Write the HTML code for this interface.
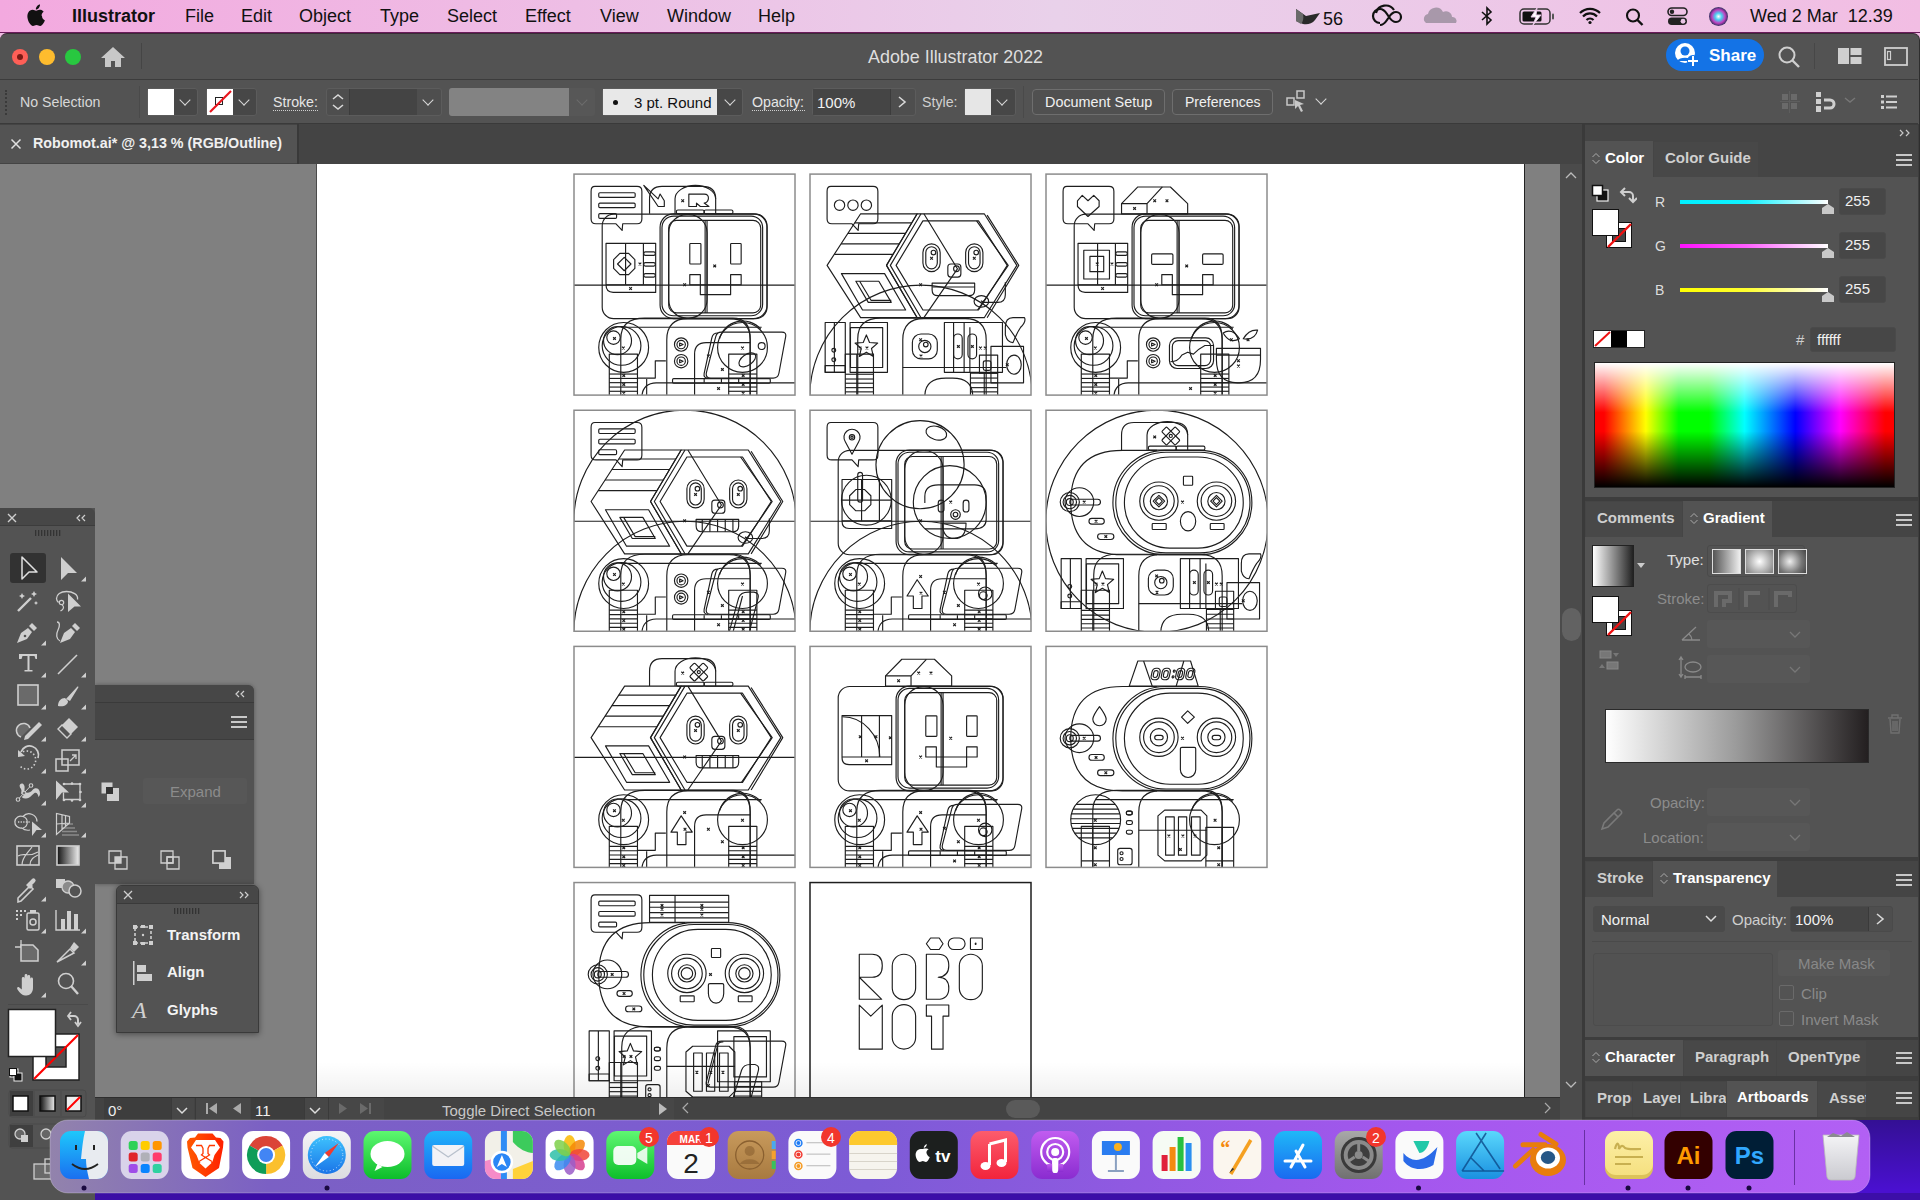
<!DOCTYPE html>
<html><head><meta charset="utf-8">
<style>
*{margin:0;padding:0;box-sizing:border-box}
html,body{width:1920px;height:1200px;overflow:hidden;background:linear-gradient(180deg,#efbde3 0,#efbde3 60px,#4410c8 60px);font-family:"Liberation Sans",sans-serif}
.a{position:absolute}
.t{position:absolute;white-space:nowrap;line-height:1}
#menubar{left:0;top:0;width:1920px;height:33px;background:linear-gradient(90deg,#f3a9df 0%,#eebee5 30%,#e9d1ea 55%,#ecc9e8 75%,#f2bde3 100%);border-bottom:1px solid #6a1a5a}
#menubar .t{top:7px;font-size:18px;color:#111}
#win{left:0;top:33px;width:1920px;height:1087px;background:#535353;border-radius:7px 7px 0 0;overflow:hidden;border-right:1px solid #2e2e2e;border-top:1px solid #3a2a36}
.ctl{background:#474747;border:1px solid #5c5c5c;border-radius:3px}
.lbl{color:#e0e0e0;font-size:14.2px}
.chev{position:absolute;width:8px;height:8px;border-right:1.6px solid #d8d8d8;border-bottom:1.6px solid #d8d8d8;transform:rotate(45deg)}
.hamb{position:absolute;width:16px;height:12px;border-top:2px solid #c8c8c8;border-bottom:2px solid #c8c8c8}
.hamb:after{content:"";position:absolute;left:0;top:3px;width:16px;height:2px;background:#c8c8c8}
.ptab{font-size:15px;font-weight:bold}
.pin{background:#474747;border:1px solid #4a4a4a;border-radius:3px}
.pdis{background:#575757;border-radius:3px}
.gbtn{position:absolute;width:29px;height:25px;border:1.5px solid #ddd}
</style></head><body>
<div id="menubar" class="a">
  <svg class="a" style="left:26px;top:4px" width="19" height="22" viewBox="0 0 19 22"><path d="M15.5 11.7c0-2.6 2.1-3.8 2.2-3.9-1.2-1.8-3.1-2-3.7-2-1.6-.2-3.1.9-3.9.9-.8 0-2-.9-3.4-.9C4.900 5.900 3.200 6.900 2.300 8.500.4 11.800 1.800 16.600 3.600 19.200c.9 1.300 2 2.700 3.400 2.700 1.400-.1 1.900-.9 3.500-.9 1.700 0 2.100.9 3.600.9 1.500 0 2.400-1.300 3.300-2.600 1-1.500 1.500-3 1.500-3-.1 0-2.900-1.100-2.900-4.600zM12.900 3.900c.7-.9 1.200-2.100 1.100-3.300-1 0-2.300.7-3 1.600-.7.800-1.300 2-1.100 3.200 1.100.1 2.300-.6 3-1.500z" fill="#111"/></svg>
  <div class="t" style="left:72px;font-weight:bold">Illustrator</div>
  <div class="t" style="left:185px">File</div>
  <div class="t" style="left:241px">Edit</div>
  <div class="t" style="left:299px">Object</div>
  <div class="t" style="left:380px">Type</div>
  <div class="t" style="left:447px">Select</div>
  <div class="t" style="left:525px">Effect</div>
  <div class="t" style="left:600px">View</div>
  <div class="t" style="left:667px">Window</div>
  <div class="t" style="left:758px">Help</div>
  <div class="t" style="left:1750px">Wed 2 Mar&nbsp; 12.39</div>
</div>
<svg class="a" style="left:1290px;top:4px" width="440" height="26" viewBox="1290 4 440 26">
 <path d="M1296 9l10 7 14-3-5 7c-3 4-8 5-12 4l-7-3z" fill="#2a2a2a"/><path d="M1296 9l7 5c1 4 0 8-2 10l-5-3z" fill="#6a6a6a"/>
 <text x="1323" y="24.5" font-family="Liberation Sans" font-size="18" fill="#111">56</text>
 <g fill="none" stroke="#111" stroke-width="2.2"><path d="M1380 23a7 7 0 0 1 0-14c3 0 5 2 7 5l2 3c2 3 4 5 7 5a5 5 0 0 0 0-10c-3 0-5 2-7 5l-2 3c-2 3-4 5-7 5"/><path d="M1376 13a10 10 0 0 1 18-3"/></g>
 <path d="M1426 23a5 5 0 0 1 2-9 8 8 0 0 1 15-2 6 6 0 0 1 9 5 4 4 0 0 1 4 6z" fill="#a898aa"/>
 <path d="M1482 12l9 8-4 4V8l4 4-9 8" fill="none" stroke="#111" stroke-width="1.6"/>
 <rect x="1520" y="9" width="30" height="15" rx="4" fill="none" stroke="#333" stroke-width="1.5"/><rect x="1522.5" y="11.5" width="19" height="10" rx="1.5" fill="#111"/><rect x="1552" y="13.5" width="2" height="6" rx="1" fill="#555"/><path d="M1537 8l-6 9h5l-3 8 8-10h-5z" fill="#fff" stroke="#e9c6e6" stroke-width="1"/>
 <path d="M1580 13a14 14 0 0 1 20 0M1583 16.5a9.5 9.5 0 0 1 14 0M1586.5 20a5 5 0 0 1 7 0" fill="none" stroke="#111" stroke-width="2.2"/><circle cx="1590" cy="22.5" r="1.6" fill="#111"/>
 <circle cx="1633" cy="15.5" r="6" fill="none" stroke="#111" stroke-width="2.1"/><path d="M1637.5 20l5 5" stroke="#111" stroke-width="2.4"/>
 <rect x="1668" y="8" width="19" height="7.5" rx="3.75" fill="none" stroke="#222" stroke-width="1.6"/><circle cx="1672" cy="11.75" r="2.2" fill="#222"/><rect x="1668" y="17.5" width="19" height="7.5" rx="3.75" fill="#222"/><circle cx="1683" cy="21.25" r="2.4" fill="#e9c6e6"/>
 <defs><radialGradient id="siri" cx="50%" cy="50%" r="50%"><stop offset="0" stop-color="#fff"/><stop offset=".35" stop-color="#4ad0f0"/><stop offset=".7" stop-color="#c040c0"/><stop offset="1" stop-color="#303060"/></radialGradient></defs><circle cx="1718.5" cy="16.5" r="9.5" fill="url(#siri)"/>
</svg>


<div id="win" class="a"></div>
<!-- title bar 33-79 -->
<div class="a" style="left:0;top:79px;width:1918px;height:1px;background:#3c3c3c"></div>
<div class="a" style="left:12px;top:49px;width:16px;height:16px;border-radius:50%;background:#fe5f57"><div class="a" style="left:5px;top:5px;width:6px;height:6px;border-radius:50%;background:#7a1a14"></div></div>
<div class="a" style="left:39px;top:49px;width:16px;height:16px;border-radius:50%;background:#febc2e"></div>
<div class="a" style="left:65px;top:49px;width:16px;height:16px;border-radius:50%;background:#28c840"></div>
<svg class="a" style="left:100px;top:45px" width="26" height="24" viewBox="0 0 26 24"><path d="M13 2L1 13h4v9h6v-6h4v6h6v-9h4z" fill="#c8c8c8"/></svg>
<div class="a" style="left:141px;top:43px;width:1px;height:26px;background:#454545"></div>
<div class="t" style="left:868px;top:49px;font-size:17.9px;color:#dedede">Adobe Illustrator 2022</div>
<div class="a" style="left:1666px;top:39px;width:98px;height:32px;border-radius:16px;background:#1473e6"></div>
<div class="t" style="left:1709px;top:47px;font-size:17px;color:#fff;font-weight:bold">Share</div>

<!-- control bar 80-124 -->
<div class="a" style="left:0;top:80px;width:1918px;height:44px;background:#535353;border-bottom:1px solid #3a3a3a"></div>
<div class="a" style="left:5px;top:90px;width:2px;height:25px;border-left:2px dotted #3a3a3a"></div>
<div class="t lbl" style="left:20px;top:95px;color:#d8d8d8">No Selection</div>
<div class="a" style="left:139px;top:86px;width:1px;height:32px;background:#4a4a4a"></div>
<div class="a ctl" style="left:147px;top:88px;width:51px;height:28px"></div>
<div class="a" style="left:148px;top:89px;width:26px;height:26px;background:#fff"></div>
<div class="chev" style="left:181px;top:96px"></div>
<div class="a ctl" style="left:206px;top:88px;width:51px;height:28px"></div>
<div class="a" style="left:207px;top:89px;width:26px;height:26px;background:#fff"></div>
<div class="a" style="left:215px;top:97px;width:8px;height:8px;border:1.5px solid #222"></div>
<svg class="a" style="left:207px;top:89px" width="26" height="26"><line x1="3" y1="23" x2="24" y2="2" stroke="#e8141c" stroke-width="2.2"/></svg>
<div class="chev" style="left:240px;top:96px"></div>
<div class="t lbl" style="left:273px;top:95px;color:#e6e6e6">Stroke:</div>
<div class="a" style="left:273px;top:110px;width:45px;height:1px;border-top:1.5px dotted #cfcfcf"></div>
<div class="a ctl" style="left:326px;top:88px;width:116px;height:28px;background:#4e4e4e"></div>
<div class="a" style="left:349px;top:89px;width:68px;height:26px;background:#444;border-left:1px solid #3c3c3c"></div>
<svg class="a" style="left:330px;top:90px" width="16" height="24"><polyline points="3,9 8,5 13,9" fill="none" stroke="#d8d8d8" stroke-width="1.6"/><polyline points="3,15 8,19 13,15" fill="none" stroke="#d8d8d8" stroke-width="1.6"/></svg>
<div class="chev" style="left:424px;top:96px"></div>
<div class="a" style="left:449px;top:88px;width:146px;height:28px;background:#575757;border-radius:3px"></div>
<div class="a" style="left:449px;top:88px;width:120px;height:28px;background:#838383;border-radius:3px 0 0 3px"></div>
<div class="chev" style="left:578px;top:96px;border-color:#6c6c6c"></div>
<div class="a ctl" style="left:602px;top:88px;width:141px;height:28px"></div>
<div class="a" style="left:603px;top:89px;width:114px;height:26px;background:#e8e8e8"></div>
<div class="a" style="left:613px;top:100px;width:5px;height:5px;border-radius:50%;background:#111"></div>
<div class="t" style="left:634px;top:95px;font-size:15px;color:#111">3 pt. Round</div>
<div class="chev" style="left:726px;top:96px"></div>
<div class="t lbl" style="left:752px;top:95px;color:#e6e6e6">Opacity:</div>
<div class="a" style="left:752px;top:110px;width:53px;height:1px;border-top:1.5px dotted #cfcfcf"></div>
<div class="a ctl" style="left:812px;top:88px;width:104px;height:28px;background:#4e4e4e"></div>
<div class="a" style="left:813px;top:89px;width:78px;height:26px;background:#454545;border-right:1px solid #3c3c3c"></div>
<div class="t" style="left:817px;top:95px;font-size:15px;color:#f2f2f2">100%</div>
<svg class="a" style="left:895px;top:94px" width="14" height="16"><polyline points="4,3 10,8 4,13" fill="none" stroke="#d8d8d8" stroke-width="1.6"/></svg>
<div class="t lbl" style="left:922px;top:95px;color:#d0d0d0">Style:</div>
<div class="a ctl" style="left:964px;top:88px;width:52px;height:28px"></div>
<div class="a" style="left:965px;top:89px;width:26px;height:26px;background:#e6e6e6"></div>
<div class="chev" style="left:998px;top:96px"></div>
<div class="a" style="left:1023px;top:86px;width:1px;height:32px;background:#4a4a4a"></div>
<div class="a" style="left:1032px;top:89px;width:133px;height:26px;border:1.5px solid #6e6e6e;border-radius:4px;background:#505050"></div>
<div class="t" style="left:1045px;top:95px;font-size:14.4px;color:#f0f0f0">Document Setup</div>
<div class="a" style="left:1172px;top:89px;width:101px;height:26px;border:1.5px solid #6e6e6e;border-radius:4px;background:#505050"></div>
<div class="t" style="left:1185px;top:95px;font-size:14px;color:#f0f0f0">Preferences</div>
<svg class="a" style="left:1285px;top:89px" width="26" height="26" viewBox="0 0 26 26"><rect x="2" y="9" width="7" height="7" fill="none" stroke="#c8c8c8" stroke-width="1.5"/><rect x="12" y="2" width="7" height="7" fill="none" stroke="#c8c8c8" stroke-width="1.5"/><path d="M10 11l9 4-4 1 3 6-2 1-3-6-3 3z" fill="#c8c8c8"/></svg>
<div class="chev" style="left:1317px;top:95px"></div>
<svg class="a" style="left:1780px;top:91px" width="20" height="22"><g fill="#6a6a6a"><rect x="2" y="3" width="6" height="6"/><rect x="11" y="3" width="6" height="6"/><rect x="2" y="12" width="6" height="6"/><rect x="11" y="12" width="6" height="6"/></g><line x1="9.5" y1="0" x2="9.5" y2="22" stroke="#5e5e5e"/><line x1="0" y1="10.5" x2="20" y2="10.5" stroke="#5e5e5e"/></svg>
<svg class="a" style="left:1815px;top:91px" width="22" height="22"><g fill="#cfcfcf"><rect x="1" y="1" width="5" height="5"/><rect x="1" y="8" width="5" height="5"/><rect x="1" y="15" width="5" height="6"/></g><path d="M9 9h6a4 4 0 0 1 0 8h-6" fill="none" stroke="#cfcfcf" stroke-width="3"/></svg>
<svg class="a" style="left:1843px;top:95px" width="14" height="10"><polyline points="2,3 7,7 12,3" fill="none" stroke="#777" stroke-width="1.4"/></svg>
<svg class="a" style="left:1880px;top:94px" width="18" height="16"><g fill="#cfcfcf"><rect x="1" y="1" width="3" height="3"/><rect x="1" y="6.5" width="3" height="3"/><rect x="1" y="12" width="3" height="3"/><rect x="6" y="1.5" width="11" height="2"/><rect x="6" y="7" width="11" height="2"/><rect x="6" y="12.5" width="11" height="2"/></g></svg>
<!-- title right icons -->
<svg class="a" style="left:1777px;top:45px" width="24" height="24"><circle cx="10" cy="10" r="7.5" fill="none" stroke="#cfcfcf" stroke-width="2"/><line x1="15.5" y1="15.5" x2="22" y2="22" stroke="#cfcfcf" stroke-width="2.4"/></svg>
<div class="a" style="left:1814px;top:43px;width:1px;height:26px;background:#474747"></div>
<svg class="a" style="left:1838px;top:48px" width="24" height="17"><g fill="#cfcfcf"><rect x="0" y="0" width="11" height="16"/><rect x="12.5" y="0" width="11" height="7"/><rect x="12.5" y="9" width="11" height="7"/></g></svg>
<svg class="a" style="left:1884px;top:47px" width="24" height="19"><rect x="1" y="1" width="22" height="17" fill="none" stroke="#cfcfcf" stroke-width="1.8"/><rect x="3.5" y="4.5" width="3" height="8" fill="none" stroke="#cfcfcf" stroke-width="1.2"/></svg>
<svg class="a" style="left:1674px;top:42px" width="26" height="26"><circle cx="11" cy="11" r="10" fill="#fff"/><circle cx="11" cy="9" r="4.5" fill="#1473e6"/><path d="M3 19a9 6 0 0 1 16 0z" fill="#1473e6"/><circle cx="19" cy="19" r="6" fill="#1473e6"/><path d="M19 14v10M14 19h10" stroke="#fff" stroke-width="2"/></svg>

<!-- tab bar 124-164 -->
<div class="a" style="left:0;top:124px;width:1582px;height:40px;background:#444"></div>
<div class="a" style="left:0;top:125px;width:297px;height:38px;background:#535353"></div>
<svg class="a" style="left:10px;top:138px" width="12" height="12"><path d="M1.5 1.5l9 9M10.5 1.5l-9 9" stroke="#e0e0e0" stroke-width="1.5"/></svg>
<div class="t" style="left:33px;top:136px;font-size:14.3px;color:#f0f0f0;font-weight:bold">Robomot.ai* @ 3,13 % (RGB/Outline)</div>

<!-- canvas -->
<div class="a" style="left:0;top:164px;width:1560px;height:933px;background:#808080"></div>
<div class="a" style="left:316px;top:164px;width:1209px;height:933px;background:#fff;border-left:1.5px solid #4a4a4a;border-right:1.5px solid #222"></div><div class="a" style="left:297px;top:124px;width:2px;height:40px;background:#393939"></div>
<!-- ART --><svg class="a" style="left:317px;top:164px" width="1208" height="933" viewBox="317 164 1208 933"><g fill="none" stroke="#1e1e1e" stroke-width="1.15" stroke-linejoin="round"><style>g *{vector-effect:non-scaling-stroke}</style><clipPath id="ab0"><rect x="574" y="174.1" width="221" height="221"/></clipPath><g clip-path="url(#ab0)"><g transform="translate(570 170.1) scale(0.19166666666666668)"><path d="M130 85H350Q375 85 375 110V255Q375 280 350 280H275L272 315L240 280H135Q110 280 110 255V110Q110 85 130 85Z"/><rect x="150" y="118" width="190" height="24" rx="6"/><rect x="150" y="172" width="190" height="24" rx="6"/><rect x="150" y="227" width="93" height="25" rx="6"/><path d="M385 80L460 150L470 125L492 160V190H460Z"/><path d="M415 228V150Q415 85 480 85H690Q760 85 760 150V228"/><path d="M548 228V150A106 70 0 0 1 760 150"/><rect x="555" y="208" width="145" height="20" rx="8"/><rect x="700" y="208" width="150" height="20" rx="8"/><path d="M620 125H700Q725 125 722 150Q718 170 700 172L725 190H680L660 172V190H620Z"/><path d="M581 153L595 167M595 153L581 167"/><rect x="168" y="230" width="860" height="545" rx="60"/><rect x="470" y="228" width="558" height="547" rx="70"/><rect x="480" y="240" width="525" height="520" rx="60"/><rect x="515" y="262" width="480" height="483" rx="40"/><rect x="515" y="232" width="200" height="540" rx="95"/><line x1="705" y1="262" x2="705" y2="745"/><line x1="715" y1="262" x2="715" y2="745"/><path d="M188 382H447V638H225Q188 638 188 600Z"/><line x1="188" y1="598" x2="447" y2="598"/><line x1="290" y1="382" x2="290" y2="598"/><line x1="383" y1="382" x2="383" y2="598"/><polygon points="338.4327719506772,512.9610059419053 305.9610059419054,545.4327719506772 260.0389940580946,545.4327719506772 227.5672280493228,512.9610059419053 227.56722804932278,467.0389940580946 260.03899405809466,434.5672280493228 305.9610059419054,434.5672280493228 338.4327719506772,467.0389940580946"/><polygon points="283,455 318,490 283,525 248,490"/><rect x="385" y="427" width="60" height="18" rx="8"/><rect x="385" y="483" width="60" height="18" rx="8"/><rect x="385" y="540" width="60" height="18" rx="8"/><path d="M358 483L372 497M372 483L358 497"/><path d="M309 611L323 625M323 611L309 625"/><rect x="625" y="383" width="58" height="107" rx="4"/><rect x="838" y="383" width="55" height="107" rx="4"/><path d="M625 545H680V598H680V650H838V598H838V545H893V598H625Z"/><path d="M748 493L762 507M762 493L748 507"/><path d="M591 591L605 605M605 591L591 605"/><line x1="20" y1="600" x2="1180" y2="600"/><circle cx="280" cy="925" r="130"/><circle cx="269" cy="917" r="101"/><circle cx="248" cy="890" r="73"/><circle cx="227" cy="874" r="35"/><path d="M225 871L239 885M239 871L225 885"/><path d="M271 921L285 935M285 921L271 935"/><path d="M265 1180V880Q265 772 390 772H850Q940 772 940 880V1180"/><line x1="280" y1="820" x2="1000" y2="820"/><circle cx="900" cy="925" r="130"/><path d="M780 880A125 125 0 0 1 995 830"/><path d="M505 1175V885Q505 775 615 775H830Q940 775 940 885V1175"/><rect x="205" y="960" width="147" height="220" rx="0"/><line x1="205" y1="1064" x2="352" y2="1064"/><line x1="205" y1="1087" x2="352" y2="1087"/><line x1="205" y1="1109" x2="352" y2="1109"/><line x1="205" y1="1132" x2="352" y2="1132"/><line x1="205" y1="1154" x2="352" y2="1154"/><path d="M273.5 1065L287.5 1079M287.5 1065L273.5 1079"/><path d="M273.5 1111L287.5 1125M287.5 1111L273.5 1125"/><path d="M273.5 1157L287.5 1171M287.5 1157L273.5 1171"/><rect x="828" y="960" width="147" height="220" rx="0"/><line x1="828" y1="1064" x2="975" y2="1064"/><line x1="828" y1="1087" x2="975" y2="1087"/><line x1="828" y1="1109" x2="975" y2="1109"/><line x1="828" y1="1132" x2="975" y2="1132"/><line x1="828" y1="1154" x2="975" y2="1154"/><path d="M896.5 1065L910.5 1079M910.5 1065L896.5 1079"/><path d="M896.5 1111L910.5 1125M910.5 1111L896.5 1125"/><path d="M896.5 1157L910.5 1171M910.5 1157L896.5 1171"/><polyline points="352,1085 445,1085 445,995 500,995"/><path d="M375 1180Q380 1112 450 1110H1180"/><line x1="400" y1="1090" x2="400" y2="1180"/><circle cx="580" cy="910" r="35"/><circle cx="580" cy="910" r="22"/><path d="M572 902L590 910L572 918Z"/><circle cx="580" cy="997" r="35"/><circle cx="580" cy="997" r="22"/><path d="M572 989L590 997L572 1005Z"/><path d="M790 845H1105Q1130 845 1125 870L1090 1060Q1085 1085 1060 1085H735Q705 1085 712 1055L760 870Q765 845 790 845Z"/><path d="M772 850Q745 850 740 875L700 1060Q695 1085 720 1085"/><rect x="535" y="1088" width="510" height="24" rx="6"/><line x1="700" y1="1090" x2="700" y2="1110"/><line x1="790" y1="1090" x2="790" y2="1110"/><line x1="880" y1="1090" x2="880" y2="1110"/><path d="M650 1180V960Q650 900 710 900H940"/><path d="M893 921L907 935M907 921L893 935"/><path d="M715 963L729 977M729 963L715 977"/><path d="M788 1033L802 1047M802 1033L788 1047"/><path d="M768 1133L782 1147M782 1133L768 1147"/><ellipse cx="925" cy="990" rx="50" ry="28" transform="rotate(-35 925 990)"/><circle cx="1000" cy="918" r="18"/></g></g><clipPath id="ab1"><rect x="810" y="174.1" width="221" height="221"/></clipPath><g clip-path="url(#ab1)"><g transform="translate(806 170.1) scale(0.19166666666666668)"><path d="M130 85H350Q375 85 375 110V255Q375 280 350 280H275L272 315L240 280H135Q110 280 110 255V110Q110 85 130 85Z"/><circle cx="175" cy="183" r="27"/><circle cx="245" cy="183" r="27"/><circle cx="315" cy="183" r="27"/><polygon points="285,228 580,228 420,497 580,770 285,770 110,497"/><polygon points="580,228 930,228 1100,497 930,770 580,770 420,497"/><polyline points="600,228 440,497 600,770"/><polyline points="945,235 1110,497 945,770"/><polygon points="610,265 900,265 1050,497 900,730 610,730 470,497"/><polyline points="890,265 1055,497 895,730"/><line x1="254.42379182156134" y1="275" x2="552.0446096654275" y2="275"/><line x1="218.64312267657994" y1="330" x2="519.3308550185874" y2="330"/><line x1="182.86245353159853" y1="385" x2="486.6171003717472" y2="385"/><line x1="147.0817843866171" y1="440" x2="453.90334572490707" y2="440"/><polygon points="185,540 410,540 520,730 295,730"/><polygon points="260,580 380,580 445,690 325,690"/><polyline points="280,580 340,680 445,680"/><polyline points="615,228 790,515 615,770"/><rect x="610" y="385" width="90" height="145" rx="45"/><rect x="625" y="400" width="60" height="115" rx="30"/><circle cx="665" cy="430" r="12"/><path d="M648 453L662 467M662 453L648 467"/><rect x="833" y="385" width="90" height="145" rx="45"/><rect x="848" y="400" width="60" height="115" rx="30"/><circle cx="888" cy="430" r="12"/><path d="M871 453L885 467M885 453L871 467"/><rect x="740" y="490" width="68" height="68" rx="16"/><circle cx="785" cy="515" r="15"/><path d="M658 590H880V625Q880 655 850 655H688Q658 655 658 625Z"/><line x1="660" y1="610" x2="880" y2="610"/><path d="M1040 585V650Q1040 690 1000 690H920"/><ellipse cx="915" cy="685" rx="38" ry="30"/><path d="M913 681L927 695M927 681L913 695"/><path d="M591 591L605 605M605 591L591 605"/><path d="M20 1180A580 580 0 0 1 1180 1180"/><path d="M505 1175V885Q505 775 615 775H830Q940 775 940 885V1175"/><path d="M270 1180V880Q270 772 390 772H850"/><rect x="100" y="795" width="105" height="260" rx="0"/><line x1="148" y1="795" x2="148" y2="1055"/><rect x="100" y="1020" width="105" height="35" rx="0"/><circle cx="145" cy="940" r="10"/><circle cx="145" cy="990" r="10"/><rect x="230" y="795" width="195" height="260" rx="0"/><rect x="232" y="822" width="168" height="208" rx="0"/><polygon points="315.0,860.0 331.45798706418924,899.3475241575014 373.9655040102995,902.8409463487533 341.6295824562643,930.6524758424986 351.4426856421333,972.1590536512467 315.0,950.0 278.5573143578667,972.1590536512467 288.3704175437357,930.6524758424986 256.0344959897005,902.8409463487533 298.54201293581076,899.3475241575014"/><path d="M275 921L289 935M289 921L275 935"/><path d="M311 921L325 935M325 921L311 935"/><rect x="205" y="960" width="147" height="220" rx="0"/><line x1="205" y1="1065" x2="352" y2="1065"/><line x1="205" y1="1090" x2="352" y2="1090"/><line x1="205" y1="1112" x2="352" y2="1112"/><line x1="205" y1="1135" x2="352" y2="1135"/><line x1="205" y1="1157" x2="352" y2="1157"/><line x1="265" y1="960" x2="265" y2="1180"/><rect x="555" y="855" width="130" height="130" rx="45"/><circle cx="620" cy="920" r="32"/><circle cx="625" cy="910" r="12"/><path d="M591 878L605 892M605 878L591 892"/><path d="M593 963L607 977M607 963L593 977"/><rect x="722" y="795" width="303" height="260" rx="0"/><line x1="770" y1="795" x2="770" y2="1055"/><line x1="825" y1="795" x2="825" y2="1055"/><line x1="855" y1="820" x2="855" y2="1055"/><rect x="770" y="855" width="45" height="130" rx="22.5"/><rect x="845" y="855" width="45" height="130" rx="22.5"/><path d="M788 913L802 927M802 913L788 927"/><path d="M861 913L875 927M875 913L861 927"/><path d="M903 921L917 935M917 921L903 935"/><path d="M928 921L942 935M942 921L928 935"/><rect x="965" y="920" width="170" height="190" rx="0"/><ellipse cx="1085" cy="1015" rx="38" ry="50"/><path d="M1043 1008L1057 1022M1057 1008L1043 1022"/><path d="M1040 820Q1040 770 1080 770H1140Q1150 790 1120 820Q1100 850 1080 900Q1050 900 1040 860Z"/><rect x="905" y="965" width="95" height="95" rx="0"/><rect x="925" y="995" width="40" height="50" rx="10"/><line x1="505" y1="1030" x2="1045" y2="1030"/><path d="M620 1180Q620 1085 730 1085H765Q870 1085 870 1180"/><rect x="858" y="1060" width="142" height="120" rx="0"/><line x1="858" y1="1085" x2="1000" y2="1085"/><line x1="858" y1="1110" x2="1000" y2="1110"/><line x1="858" y1="1135" x2="1000" y2="1135"/><line x1="858" y1="1157" x2="1000" y2="1157"/><line x1="930" y1="1060" x2="930" y2="1180"/></g></g><clipPath id="ab2"><rect x="1046" y="174.1" width="221" height="221"/></clipPath><g clip-path="url(#ab2)"><g transform="translate(1042 170.1) scale(0.19166666666666668)"><path d="M130 85H350Q375 85 375 110V255Q375 280 350 280H275L272 315L240 280H135Q110 280 110 255V110Q110 85 130 85Z"/><path d="M185 160L210 132L240 160L270 132L298 160V190L240 242L185 190Z"/><path d="M415 228V175L500 88H670L760 175V228Z"/><path d="M415 175H548V228M548 175L628 88"/><path d="M476 193L490 207M490 193L476 207"/><path d="M581 153L595 167M595 153L581 167"/><path d="M645 153L659 167M659 153L645 167"/><rect x="168" y="230" width="860" height="545" rx="60"/><rect x="470" y="228" width="558" height="547" rx="70"/><rect x="480" y="240" width="525" height="520" rx="60"/><rect x="515" y="262" width="480" height="483" rx="40"/><rect x="515" y="232" width="200" height="540" rx="95"/><line x1="705" y1="262" x2="705" y2="745"/><line x1="715" y1="262" x2="715" y2="745"/><path d="M188 382H447V638H225Q188 638 188 600Z"/><line x1="188" y1="598" x2="447" y2="598"/><line x1="290" y1="382" x2="290" y2="598"/><line x1="383" y1="382" x2="383" y2="598"/><rect x="218" y="418" width="134" height="150" rx="0"/><rect x="250" y="450" width="72" height="80" rx="0"/><rect x="385" y="427" width="60" height="18" rx="8"/><rect x="385" y="483" width="60" height="18" rx="8"/><rect x="385" y="540" width="60" height="18" rx="8"/><path d="M281 483L295 497M295 483L281 497"/><path d="M358 483L372 497M372 483L358 497"/><path d="M309 611L323 625M323 611L309 625"/><rect x="572" y="437" width="111" height="55" rx="6"/><rect x="838" y="437" width="107" height="55" rx="6"/><path d="M625 545H680V598H680V650H838V598H838V545H893V598H625Z"/><path d="M748 493L762 507M762 493L748 507"/><path d="M591 591L605 605M605 591L591 605"/><line x1="20" y1="600" x2="1180" y2="600"/><circle cx="280" cy="925" r="130"/><circle cx="269" cy="917" r="101"/><circle cx="248" cy="890" r="73"/><circle cx="227" cy="874" r="35"/><path d="M225 871L239 885M239 871L225 885"/><path d="M271 921L285 935M285 921L271 935"/><path d="M265 1180V880Q265 772 390 772H850Q940 772 940 880V1180"/><line x1="280" y1="820" x2="1000" y2="820"/><circle cx="900" cy="925" r="130"/><path d="M780 880A125 125 0 0 1 995 830"/><path d="M505 1175V885Q505 775 615 775H830Q940 775 940 885V1175"/><rect x="205" y="960" width="147" height="220" rx="0"/><line x1="205" y1="1064" x2="352" y2="1064"/><line x1="205" y1="1087" x2="352" y2="1087"/><line x1="205" y1="1109" x2="352" y2="1109"/><line x1="205" y1="1132" x2="352" y2="1132"/><line x1="205" y1="1154" x2="352" y2="1154"/><path d="M273.5 1065L287.5 1079M287.5 1065L273.5 1079"/><path d="M273.5 1111L287.5 1125M287.5 1111L273.5 1125"/><path d="M273.5 1157L287.5 1171M287.5 1157L273.5 1171"/><rect x="828" y="960" width="147" height="220" rx="0"/><line x1="828" y1="1064" x2="975" y2="1064"/><line x1="828" y1="1087" x2="975" y2="1087"/><line x1="828" y1="1109" x2="975" y2="1109"/><line x1="828" y1="1132" x2="975" y2="1132"/><line x1="828" y1="1154" x2="975" y2="1154"/><path d="M896.5 1065L910.5 1079M910.5 1065L896.5 1079"/><path d="M896.5 1111L910.5 1125M910.5 1111L896.5 1125"/><path d="M896.5 1157L910.5 1171M910.5 1157L896.5 1171"/><polyline points="352,1085 445,1085 445,995 500,995"/><path d="M375 1180Q380 1112 450 1110H1180"/><line x1="400" y1="1090" x2="400" y2="1180"/><circle cx="580" cy="910" r="35"/><circle cx="580" cy="910" r="22"/><path d="M572 902L590 910L572 918Z"/><circle cx="580" cy="997" r="35"/><circle cx="580" cy="997" r="22"/><path d="M572 989L590 997L572 1005Z"/><rect x="665" y="875" width="230" height="160" rx="40"/><rect x="680" y="890" width="200" height="130" rx="30"/><path d="M670 1000Q710 1000 730 965L760 950L790 960Q820 930 850 915H895"/><path d="M910 930H1140V990Q1140 1110 1030 1110H1020Q910 1110 910 990Z"/><line x1="910" y1="965" x2="1140" y2="965"/><path d="M945 850Q990 820 1030 880Q980 910 945 850Z"/><path d="M1050 880Q1080 830 1125 835Q1110 890 1050 880Z"/><path d="M768 1133L782 1147M782 1133L768 1147"/><path d="M1018 988L1032 1002M1032 988L1018 1002"/><path d="M1018 1015L1032 1029M1032 1015L1018 1029"/><path d="M981 878L995 892M995 878L981 892"/><path d="M1068 878L1082 892M1082 878L1068 892"/></g></g><clipPath id="ab3"><rect x="574" y="410.25" width="221" height="221"/></clipPath><g clip-path="url(#ab3)"><g transform="translate(570 406.25) scale(0.19166666666666668)"><path d="M20 600A580 580 0 0 1 1180 600"/><path d="M130 85H350Q375 85 375 110V255Q375 280 350 280H275L272 315L240 280H135Q110 280 110 255V110Q110 85 130 85Z"/><rect x="150" y="118" width="190" height="24" rx="6"/><rect x="150" y="172" width="190" height="24" rx="6"/><rect x="150" y="227" width="93" height="25" rx="6"/><polygon points="285,228 580,228 420,497 580,770 285,770 110,497"/><polygon points="580,228 930,228 1100,497 930,770 580,770 420,497"/><polyline points="600,228 440,497 600,770"/><polyline points="945,235 1110,497 945,770"/><polygon points="610,265 900,265 1050,497 900,730 610,730 470,497"/><polyline points="890,265 1055,497 895,730"/><line x1="254.42379182156134" y1="275" x2="552.0446096654275" y2="275"/><line x1="218.64312267657994" y1="330" x2="519.3308550185874" y2="330"/><line x1="182.86245353159853" y1="385" x2="486.6171003717472" y2="385"/><line x1="147.0817843866171" y1="440" x2="453.90334572490707" y2="440"/><polygon points="185,540 410,540 520,730 295,730"/><polygon points="260,580 380,580 445,690 325,690"/><polyline points="280,580 340,680 445,680"/><polyline points="615,228 790,515 615,770"/><rect x="610" y="385" width="90" height="145" rx="45"/><rect x="625" y="400" width="60" height="115" rx="30"/><circle cx="665" cy="430" r="12"/><path d="M648 453L662 467M662 453L648 467"/><rect x="833" y="385" width="90" height="145" rx="45"/><rect x="848" y="400" width="60" height="115" rx="30"/><circle cx="888" cy="430" r="12"/><path d="M871 453L885 467M885 453L871 467"/><rect x="740" y="490" width="68" height="68" rx="16"/><circle cx="785" cy="515" r="15"/><path d="M658 590H880V625Q880 655 850 655H688Q658 655 658 625Z"/><line x1="690" y1="590" x2="690" y2="655"/><line x1="730" y1="590" x2="730" y2="655"/><line x1="770" y1="590" x2="770" y2="655"/><line x1="810" y1="590" x2="810" y2="655"/><line x1="850" y1="590" x2="850" y2="655"/><path d="M1040 585V650Q1040 690 1000 690H920"/><ellipse cx="915" cy="685" rx="38" ry="30"/><path d="M913 681L927 695M927 681L913 695"/><path d="M591 591L605 605M605 591L591 605"/><line x1="20" y1="600" x2="1180" y2="600"/><path d="M20 1180A580 580 0 0 1 1180 1180"/><circle cx="280" cy="925" r="130"/><circle cx="269" cy="917" r="101"/><circle cx="248" cy="890" r="73"/><circle cx="227" cy="874" r="35"/><path d="M225 871L239 885M239 871L225 885"/><path d="M271 921L285 935M285 921L271 935"/><path d="M265 1180V880Q265 772 390 772H850Q940 772 940 880V1180"/><line x1="280" y1="820" x2="1000" y2="820"/><circle cx="900" cy="925" r="130"/><path d="M780 880A125 125 0 0 1 995 830"/><path d="M505 1175V885Q505 775 615 775H830Q940 775 940 885V1175"/><rect x="205" y="960" width="147" height="220" rx="0"/><line x1="205" y1="1064" x2="352" y2="1064"/><line x1="205" y1="1087" x2="352" y2="1087"/><line x1="205" y1="1109" x2="352" y2="1109"/><line x1="205" y1="1132" x2="352" y2="1132"/><line x1="205" y1="1154" x2="352" y2="1154"/><path d="M273.5 1065L287.5 1079M287.5 1065L273.5 1079"/><path d="M273.5 1111L287.5 1125M287.5 1111L273.5 1125"/><path d="M273.5 1157L287.5 1171M287.5 1157L273.5 1171"/><rect x="828" y="960" width="147" height="220" rx="0"/><line x1="828" y1="1064" x2="975" y2="1064"/><line x1="828" y1="1087" x2="975" y2="1087"/><line x1="828" y1="1109" x2="975" y2="1109"/><line x1="828" y1="1132" x2="975" y2="1132"/><line x1="828" y1="1154" x2="975" y2="1154"/><path d="M896.5 1065L910.5 1079M910.5 1065L896.5 1079"/><path d="M896.5 1111L910.5 1125M910.5 1111L896.5 1125"/><path d="M896.5 1157L910.5 1171M910.5 1157L896.5 1171"/><polyline points="352,1085 445,1085 445,995 500,995"/><path d="M375 1180Q380 1112 450 1110H1180"/><line x1="400" y1="1090" x2="400" y2="1180"/><circle cx="580" cy="910" r="35"/><circle cx="580" cy="910" r="22"/><path d="M572 902L590 910L572 918Z"/><circle cx="580" cy="997" r="35"/><circle cx="580" cy="997" r="22"/><path d="M572 989L590 997L572 1005Z"/><path d="M790 845H1105Q1130 845 1125 870L1090 1060Q1085 1085 1060 1085H735Q705 1085 712 1055L760 870Q765 845 790 845Z"/><path d="M772 850Q745 850 740 875L700 1060Q695 1085 720 1085"/><rect x="535" y="1088" width="510" height="24" rx="6"/><line x1="700" y1="1090" x2="700" y2="1110"/><line x1="790" y1="1090" x2="790" y2="1110"/><line x1="880" y1="1090" x2="880" y2="1110"/><path d="M650 1180V960Q650 900 710 900H940"/><path d="M893 921L907 935M907 921L893 935"/><path d="M715 963L729 977M729 963L715 977"/><path d="M788 1033L802 1047M802 1033L788 1047"/><path d="M768 1133L782 1147M782 1133L768 1147"/><path d="M830 1180L880 1000Q890 970 930 970H960Q990 975 980 1005L935 1180"/><path d="M850 1180L900 990"/></g></g><clipPath id="ab4"><rect x="810" y="410.25" width="221" height="221"/></clipPath><g clip-path="url(#ab4)"><g transform="translate(806 406.25) scale(0.19166666666666668)"><path d="M130 85H350Q375 85 375 110V255Q375 280 350 280H275L272 315L240 280H135Q110 280 110 255V110Q110 85 130 85Z"/><path d="M240 250L205 185A42 42 0 1 1 275 185Z"/><circle cx="240" cy="162" r="14"/><circle cx="240" cy="162" r="6"/><rect x="168" y="230" width="860" height="545" rx="60"/><rect x="470" y="228" width="558" height="547" rx="70"/><rect x="480" y="240" width="525" height="520" rx="60"/><rect x="515" y="262" width="480" height="483" rx="40"/><rect x="515" y="232" width="200" height="540" rx="95"/><line x1="705" y1="262" x2="705" y2="745"/><line x1="715" y1="262" x2="715" y2="745"/><path d="M188 382H447V638H225Q188 638 188 600Z"/><line x1="188" y1="598" x2="447" y2="598"/><line x1="290" y1="382" x2="290" y2="598"/><line x1="383" y1="382" x2="383" y2="598"/><polygon points="338.4327719506772,512.9610059419053 305.9610059419054,545.4327719506772 260.0389940580946,545.4327719506772 227.5672280493228,512.9610059419053 227.56722804932278,467.0389940580946 260.03899405809466,434.5672280493228 305.9610059419054,434.5672280493228 338.4327719506772,467.0389940580946"/><circle cx="315" cy="490" r="130"/><rect x="270" y="345" width="25" height="155" rx="12.5"/><line x1="188" y1="490" x2="447" y2="490"/><circle cx="595" cy="305" r="230"/><ellipse cx="680" cy="140" rx="55" ry="35" transform="rotate(15 680 140)"/><circle cx="750" cy="500" r="190"/><path d="M620 505V470Q620 410 690 410H880Q940 410 940 470V590Q940 640 880 640H620"/><rect x="690" y="490" width="30" height="62" rx="15.0"/><rect x="820" y="490" width="30" height="62" rx="15.0"/><circle cx="780" cy="565" r="25"/><circle cx="780" cy="565" r="12"/><path d="M712 610H835Q835 690 775 690Q712 690 712 610"/><path d="M748 493L762 507M762 493L748 507"/><path d="M591 591L605 605M605 591L591 605"/><line x1="20" y1="600" x2="1180" y2="600"/><path d="M20 1180A580 580 0 0 1 1180 1180"/><circle cx="280" cy="925" r="130"/><circle cx="269" cy="917" r="101"/><circle cx="248" cy="890" r="73"/><circle cx="227" cy="874" r="35"/><path d="M225 871L239 885M239 871L225 885"/><path d="M271 921L285 935M285 921L271 935"/><path d="M265 1180V880Q265 772 390 772H850Q940 772 940 880V1180"/><line x1="280" y1="820" x2="1000" y2="820"/><circle cx="900" cy="925" r="130"/><path d="M780 880A125 125 0 0 1 995 830"/><path d="M505 1175V885Q505 775 615 775H830Q940 775 940 885V1175"/><rect x="205" y="960" width="147" height="220" rx="0"/><line x1="205" y1="1064" x2="352" y2="1064"/><line x1="205" y1="1087" x2="352" y2="1087"/><line x1="205" y1="1109" x2="352" y2="1109"/><line x1="205" y1="1132" x2="352" y2="1132"/><line x1="205" y1="1154" x2="352" y2="1154"/><path d="M273.5 1065L287.5 1079M287.5 1065L273.5 1079"/><path d="M273.5 1111L287.5 1125M287.5 1111L273.5 1125"/><path d="M273.5 1157L287.5 1171M287.5 1157L273.5 1171"/><rect x="828" y="960" width="147" height="220" rx="0"/><line x1="828" y1="1064" x2="975" y2="1064"/><line x1="828" y1="1087" x2="975" y2="1087"/><line x1="828" y1="1109" x2="975" y2="1109"/><line x1="828" y1="1132" x2="975" y2="1132"/><line x1="828" y1="1154" x2="975" y2="1154"/><path d="M896.5 1065L910.5 1079M910.5 1065L896.5 1079"/><path d="M896.5 1111L910.5 1125M910.5 1111L896.5 1125"/><path d="M896.5 1157L910.5 1171M910.5 1157L896.5 1171"/><polyline points="352,1085 445,1085 445,995 500,995"/><path d="M375 1180Q380 1112 450 1110H1180"/><line x1="400" y1="1090" x2="400" y2="1180"/><path d="M580 905L638 990H605V1055H560V990H527Z"/><path d="M591 881L605 895M605 881L591 895"/><path d="M593 968L607 982M607 968L593 982"/><path d="M790 845H1105Q1130 845 1125 870L1090 1060Q1085 1085 1060 1085H735Q705 1085 712 1055L760 870Q765 845 790 845Z"/><path d="M772 850Q745 850 740 875L700 1060Q695 1085 720 1085"/><rect x="535" y="1088" width="510" height="24" rx="6"/><line x1="700" y1="1090" x2="700" y2="1110"/><line x1="790" y1="1090" x2="790" y2="1110"/><line x1="880" y1="1090" x2="880" y2="1110"/><path d="M650 1180V960Q650 900 710 900H940"/><path d="M893 921L907 935M907 921L893 935"/><path d="M715 963L729 977M729 963L715 977"/><path d="M788 1033L802 1047M802 1033L788 1047"/><path d="M768 1133L782 1147M782 1133L768 1147"/><circle cx="935" cy="978" r="35"/><circle cx="925" cy="988" r="20"/></g></g><clipPath id="ab5"><rect x="1046" y="410.25" width="221" height="221"/></clipPath><g clip-path="url(#ab5)"><g transform="translate(1042 406.25) scale(0.19166666666666668)"><circle cx="600" cy="600" r="580"/><path d="M415 228V150Q415 85 480 85H690Q760 85 760 150V228"/><path d="M548 228V150A106 70 0 0 1 760 150"/><rect x="555" y="208" width="145" height="20" rx="8"/><rect x="700" y="208" width="150" height="20" rx="8"/><rect x="622" y="137" width="100" height="36" rx="6" transform="rotate(45 672 155)"/><rect x="622" y="137" width="100" height="36" rx="6" transform="rotate(-45 672 155)"/><circle cx="672" cy="155" r="8"/><path d="M581 153L595 167M595 153L581 167"/><path d="M600 230H420Q150 230 150 500Q150 775 420 775H600"/><rect x="370" y="230" width="725" height="545" rx="272"/><rect x="385" y="240" width="700" height="525" rx="262"/><rect x="430" y="265" width="620" height="475" rx="237"/><circle cx="610" cy="495" r="100"/><circle cx="610" cy="495" r="80"/><circle cx="610" cy="495" r="45"/><polygon points="580,495 610,465 640,495 610,525"/><polygon points="592,495 610,477 628,495 610,513"/><circle cx="910" cy="495" r="100"/><circle cx="910" cy="495" r="80"/><circle cx="910" cy="495" r="45"/><polygon points="880,495 910,465 940,495 910,525"/><polygon points="892,495 910,477 928,495 910,513"/><circle cx="145" cy="500" r="50"/><circle cx="145" cy="500" r="35"/><circle cx="145" cy="500" r="18"/><circle cx="195" cy="500" r="75"/><rect x="145" y="485" width="160" height="30" rx="15.0"/><rect x="245" y="585" width="80" height="30" rx="15.0"/><rect x="290" y="665" width="85" height="30" rx="15.0"/><path d="M213 493L227 507M227 493L213 507"/><path d="M275 593L289 607M289 593L275 607"/><path d="M326 673L340 687M340 673L326 687"/><path d="M726 493L740 507M740 493L726 507"/><ellipse cx="762" cy="600" rx="40" ry="50"/><rect x="738" y="365" width="48" height="47" rx="4"/><rect x="575" y="612" width="73" height="31" rx="4"/><rect x="878" y="612" width="72" height="31" rx="4"/><path d="M505 1175V885Q505 775 615 775H830Q940 775 940 885V1175"/><path d="M270 1180V880Q270 772 390 772H850"/><rect x="100" y="795" width="105" height="260" rx="0"/><line x1="148" y1="795" x2="148" y2="1055"/><rect x="100" y="1020" width="105" height="35" rx="0"/><circle cx="145" cy="940" r="10"/><circle cx="145" cy="990" r="10"/><rect x="230" y="795" width="195" height="260" rx="0"/><rect x="232" y="822" width="168" height="208" rx="0"/><polygon points="315.0,860.0 331.45798706418924,899.3475241575014 373.9655040102995,902.8409463487533 341.6295824562643,930.6524758424986 351.4426856421333,972.1590536512467 315.0,950.0 278.5573143578667,972.1590536512467 288.3704175437357,930.6524758424986 256.0344959897005,902.8409463487533 298.54201293581076,899.3475241575014"/><path d="M275 921L289 935M289 921L275 935"/><path d="M311 921L325 935M325 921L311 935"/><rect x="205" y="960" width="147" height="220" rx="0"/><line x1="205" y1="1065" x2="352" y2="1065"/><line x1="205" y1="1090" x2="352" y2="1090"/><line x1="205" y1="1112" x2="352" y2="1112"/><line x1="205" y1="1135" x2="352" y2="1135"/><line x1="205" y1="1157" x2="352" y2="1157"/><line x1="265" y1="960" x2="265" y2="1180"/><rect x="555" y="855" width="130" height="130" rx="45"/><circle cx="620" cy="920" r="32"/><circle cx="625" cy="910" r="12"/><path d="M591 878L605 892M605 878L591 892"/><path d="M593 963L607 977M607 963L593 977"/><rect x="722" y="795" width="303" height="260" rx="0"/><line x1="770" y1="795" x2="770" y2="1055"/><line x1="825" y1="795" x2="825" y2="1055"/><line x1="855" y1="820" x2="855" y2="1055"/><rect x="770" y="855" width="45" height="130" rx="22.5"/><rect x="845" y="855" width="45" height="130" rx="22.5"/><path d="M788 913L802 927M802 913L788 927"/><path d="M861 913L875 927M875 913L861 927"/><path d="M903 921L917 935M917 921L903 935"/><path d="M928 921L942 935M942 921L928 935"/><rect x="965" y="920" width="170" height="190" rx="0"/><ellipse cx="1085" cy="1015" rx="38" ry="50"/><path d="M1043 1008L1057 1022M1057 1008L1043 1022"/><path d="M1040 820Q1040 770 1080 770H1140Q1150 790 1120 820Q1100 850 1080 900Q1050 900 1040 860Z"/><rect x="905" y="965" width="95" height="95" rx="0"/><rect x="925" y="995" width="40" height="50" rx="10"/><line x1="505" y1="1030" x2="1045" y2="1030"/><path d="M620 1180Q620 1085 730 1085H765Q870 1085 870 1180"/><rect x="858" y="1060" width="142" height="120" rx="0"/><line x1="858" y1="1085" x2="1000" y2="1085"/><line x1="858" y1="1110" x2="1000" y2="1110"/><line x1="858" y1="1135" x2="1000" y2="1135"/><line x1="858" y1="1157" x2="1000" y2="1157"/><line x1="930" y1="1060" x2="930" y2="1180"/></g></g><clipPath id="ab6"><rect x="574" y="646.4" width="221" height="221"/></clipPath><g clip-path="url(#ab6)"><g transform="translate(570 642.4) scale(0.19166666666666668)"><path d="M415 228V150Q415 85 480 85H690Q760 85 760 150V228"/><path d="M548 228V150A106 70 0 0 1 760 150"/><rect x="555" y="208" width="145" height="20" rx="8"/><rect x="700" y="208" width="150" height="20" rx="8"/><rect x="622" y="137" width="100" height="36" rx="6" transform="rotate(45 672 155)"/><rect x="622" y="137" width="100" height="36" rx="6" transform="rotate(-45 672 155)"/><circle cx="672" cy="155" r="8"/><path d="M581 153L595 167M595 153L581 167"/><polygon points="285,228 580,228 420,497 580,770 285,770 110,497"/><polygon points="580,228 930,228 1100,497 930,770 580,770 420,497"/><polyline points="600,228 440,497 600,770"/><polyline points="945,235 1110,497 945,770"/><polygon points="610,265 900,265 1050,497 900,730 610,730 470,497"/><polyline points="890,265 1055,497 895,730"/><line x1="254.42379182156134" y1="275" x2="552.0446096654275" y2="275"/><line x1="218.64312267657994" y1="330" x2="519.3308550185874" y2="330"/><line x1="182.86245353159853" y1="385" x2="486.6171003717472" y2="385"/><line x1="147.0817843866171" y1="440" x2="453.90334572490707" y2="440"/><polygon points="185,540 410,540 520,730 295,730"/><polygon points="260,580 380,580 445,690 325,690"/><polyline points="280,580 340,680 445,680"/><polyline points="615,228 790,515 615,770"/><rect x="610" y="385" width="90" height="145" rx="45"/><rect x="625" y="400" width="60" height="115" rx="30"/><circle cx="665" cy="430" r="12"/><path d="M648 453L662 467M662 453L648 467"/><rect x="833" y="385" width="90" height="145" rx="45"/><rect x="848" y="400" width="60" height="115" rx="30"/><circle cx="888" cy="430" r="12"/><path d="M871 453L885 467M885 453L871 467"/><rect x="740" y="490" width="68" height="68" rx="16"/><circle cx="785" cy="515" r="15"/><path d="M658 590H880V625Q880 655 850 655H688Q658 655 658 625Z"/><line x1="690" y1="590" x2="690" y2="655"/><line x1="730" y1="590" x2="730" y2="655"/><line x1="770" y1="590" x2="770" y2="655"/><line x1="810" y1="590" x2="810" y2="655"/><line x1="850" y1="590" x2="850" y2="655"/><path d="M591 591L605 605M605 591L591 605"/><line x1="20" y1="600" x2="1180" y2="600"/><circle cx="280" cy="925" r="130"/><circle cx="269" cy="917" r="101"/><circle cx="248" cy="890" r="73"/><circle cx="227" cy="874" r="35"/><path d="M225 871L239 885M239 871L225 885"/><path d="M271 921L285 935M285 921L271 935"/><path d="M265 1180V880Q265 772 390 772H850Q940 772 940 880V1180"/><line x1="280" y1="820" x2="1000" y2="820"/><circle cx="900" cy="925" r="130"/><path d="M780 880A125 125 0 0 1 995 830"/><path d="M505 1175V885Q505 775 615 775H830Q940 775 940 885V1175"/><rect x="205" y="960" width="147" height="220" rx="0"/><line x1="205" y1="1064" x2="352" y2="1064"/><line x1="205" y1="1087" x2="352" y2="1087"/><line x1="205" y1="1109" x2="352" y2="1109"/><line x1="205" y1="1132" x2="352" y2="1132"/><line x1="205" y1="1154" x2="352" y2="1154"/><path d="M273.5 1065L287.5 1079M287.5 1065L273.5 1079"/><path d="M273.5 1111L287.5 1125M287.5 1111L273.5 1125"/><path d="M273.5 1157L287.5 1171M287.5 1157L273.5 1171"/><rect x="828" y="960" width="147" height="220" rx="0"/><line x1="828" y1="1064" x2="975" y2="1064"/><line x1="828" y1="1087" x2="975" y2="1087"/><line x1="828" y1="1109" x2="975" y2="1109"/><line x1="828" y1="1132" x2="975" y2="1132"/><line x1="828" y1="1154" x2="975" y2="1154"/><path d="M896.5 1065L910.5 1079M910.5 1065L896.5 1079"/><path d="M896.5 1111L910.5 1125M910.5 1111L896.5 1125"/><path d="M896.5 1157L910.5 1171M910.5 1157L896.5 1171"/><polyline points="352,1085 445,1085 445,995 500,995"/><path d="M375 1180Q380 1112 450 1110H1180"/><line x1="400" y1="1090" x2="400" y2="1180"/><path d="M580 905L638 990H605V1055H560V990H527Z"/><path d="M591 881L605 895M605 881L591 895"/><path d="M593 968L607 982M607 968L593 982"/><path d="M650 1180V960Q650 900 710 900H940"/><path d="M893 921L907 935M907 921L893 935"/><path d="M715 968L729 982M729 968L715 982"/><path d="M788 1033L802 1047M802 1033L788 1047"/></g></g><clipPath id="ab7"><rect x="810" y="646.4" width="221" height="221"/></clipPath><g clip-path="url(#ab7)"><g transform="translate(806 642.4) scale(0.19166666666666668)"><path d="M415 228V175L500 88H670L760 175V228Z"/><path d="M415 175H548V228M548 175L628 88"/><path d="M476 193L490 207M490 193L476 207"/><path d="M581 153L595 167M595 153L581 167"/><path d="M645 153L659 167M659 153L645 167"/><rect x="168" y="230" width="860" height="545" rx="60"/><rect x="470" y="228" width="558" height="547" rx="70"/><rect x="480" y="240" width="525" height="520" rx="60"/><rect x="515" y="262" width="480" height="483" rx="40"/><rect x="515" y="232" width="200" height="540" rx="95"/><line x1="705" y1="262" x2="705" y2="745"/><line x1="715" y1="262" x2="715" y2="745"/><path d="M188 382H447V638H225Q188 638 188 600Z"/><line x1="188" y1="598" x2="447" y2="598"/><line x1="290" y1="382" x2="290" y2="598"/><line x1="383" y1="382" x2="383" y2="598"/><path d="M190 388A195 210 0 0 1 385 598"/><path d="M276 485L290 499M290 485L276 499"/><path d="M358 485L372 499M372 485L358 499"/><path d="M433 491L447 505M447 491L433 505"/><path d="M309 611L323 625M323 611L309 625"/><rect x="625" y="383" width="58" height="107" rx="4"/><rect x="838" y="383" width="55" height="107" rx="4"/><path d="M625 545H680V598H680V650H838V598H838V545H893V598H625Z"/><path d="M748 493L762 507M762 493L748 507"/><path d="M591 591L605 605M605 591L591 605"/><circle cx="280" cy="925" r="130"/><circle cx="269" cy="917" r="101"/><circle cx="248" cy="890" r="73"/><circle cx="227" cy="874" r="35"/><path d="M225 871L239 885M239 871L225 885"/><path d="M271 921L285 935M285 921L271 935"/><path d="M265 1180V880Q265 772 390 772H850Q940 772 940 880V1180"/><line x1="280" y1="820" x2="1000" y2="820"/><circle cx="900" cy="925" r="130"/><path d="M780 880A125 125 0 0 1 995 830"/><path d="M505 1175V885Q505 775 615 775H830Q940 775 940 885V1175"/><rect x="205" y="960" width="147" height="220" rx="0"/><line x1="205" y1="1064" x2="352" y2="1064"/><line x1="205" y1="1087" x2="352" y2="1087"/><line x1="205" y1="1109" x2="352" y2="1109"/><line x1="205" y1="1132" x2="352" y2="1132"/><line x1="205" y1="1154" x2="352" y2="1154"/><path d="M273.5 1065L287.5 1079M287.5 1065L273.5 1079"/><path d="M273.5 1111L287.5 1125M287.5 1111L273.5 1125"/><path d="M273.5 1157L287.5 1171M287.5 1157L273.5 1171"/><rect x="828" y="960" width="147" height="220" rx="0"/><line x1="828" y1="1064" x2="975" y2="1064"/><line x1="828" y1="1087" x2="975" y2="1087"/><line x1="828" y1="1109" x2="975" y2="1109"/><line x1="828" y1="1132" x2="975" y2="1132"/><line x1="828" y1="1154" x2="975" y2="1154"/><path d="M896.5 1065L910.5 1079M910.5 1065L896.5 1079"/><path d="M896.5 1111L910.5 1125M910.5 1111L896.5 1125"/><path d="M896.5 1157L910.5 1171M910.5 1157L896.5 1171"/><polyline points="352,1085 445,1085 445,995 500,995"/><path d="M375 1180Q380 1112 450 1110H1180"/><line x1="400" y1="1090" x2="400" y2="1180"/><path d="M580 905L638 990H605V1055H560V990H527Z"/><path d="M591 881L605 895M605 881L591 895"/><path d="M593 968L607 982M607 968L593 982"/><path d="M790 845H1105Q1130 845 1125 870L1090 1060Q1085 1085 1060 1085H735Q705 1085 712 1055L760 870Q765 845 790 845Z"/><path d="M772 850Q745 850 740 875L700 1060Q695 1085 720 1085"/><rect x="535" y="1088" width="510" height="24" rx="6"/><line x1="700" y1="1090" x2="700" y2="1110"/><line x1="790" y1="1090" x2="790" y2="1110"/><line x1="880" y1="1090" x2="880" y2="1110"/><path d="M650 1180V960Q650 900 710 900H940"/><path d="M893 921L907 935M907 921L893 935"/><path d="M715 963L729 977M729 963L715 977"/><path d="M788 1033L802 1047M802 1033L788 1047"/><path d="M768 1133L782 1147M782 1133L768 1147"/><circle cx="935" cy="978" r="35"/><circle cx="925" cy="988" r="20"/></g></g><clipPath id="ab8"><rect x="1046" y="646.4" width="221" height="221"/></clipPath><g clip-path="url(#ab8)"><g transform="translate(1042 642.4) scale(0.19166666666666668)"><polygon points="500,97 775,97 815,228 455,228"/><line x1="530" y1="97" x2="575" y2="228"/><line x1="740" y1="97" x2="700" y2="228"/><g transform="skewX(-12) translate(32 0)"><rect x="575" y="135" width="42" height="60" rx="18"/><rect x="585" y="147" width="22" height="36" rx="10"/><rect x="628" y="135" width="42" height="60" rx="18"/><rect x="638" y="147" width="22" height="36" rx="10"/><rect x="703" y="135" width="42" height="60" rx="18"/><rect x="713" y="147" width="22" height="36" rx="10"/><rect x="756" y="135" width="42" height="60" rx="18"/><rect x="766" y="147" width="22" height="36" rx="10"/><circle cx="690" cy="150" r="5"/><circle cx="690" cy="180" r="5"/></g><path d="M600 230H420Q150 230 150 500Q150 775 420 775H600"/><rect x="370" y="230" width="725" height="545" rx="272"/><rect x="385" y="240" width="700" height="525" rx="262"/><rect x="430" y="265" width="620" height="475" rx="237"/><circle cx="610" cy="495" r="100"/><circle cx="610" cy="495" r="80"/><circle cx="610" cy="495" r="45"/><rect x="588" y="485" width="44" height="23" rx="11.5"/><circle cx="910" cy="495" r="100"/><circle cx="910" cy="495" r="80"/><circle cx="910" cy="495" r="45"/><rect x="888" y="485" width="44" height="23" rx="11.5"/><circle cx="145" cy="500" r="50"/><circle cx="145" cy="500" r="35"/><circle cx="145" cy="500" r="18"/><circle cx="195" cy="500" r="75"/><rect x="145" y="485" width="160" height="30" rx="15.0"/><rect x="245" y="585" width="80" height="30" rx="15.0"/><rect x="290" y="665" width="85" height="30" rx="15.0"/><path d="M213 493L227 507M227 493L213 507"/><path d="M275 593L289 607M289 593L275 607"/><path d="M326 673L340 687M340 673L326 687"/><path d="M726 493L740 507M740 493L726 507"/><path d="M722 555Q722 548 730 548H795Q802 548 802 555V665A40 40 0 0 1 722 665Z"/><polygon points="728,390 760,357 795,390 760,422"/><path d="M300 335Q268 378 265 400A35 35 0 0 0 335 400Q332 378 300 335Z"/><circle cx="280" cy="925" r="130"/><line x1="177.530492340404" y1="845" x2="382.469507659596" y2="845"/><line x1="162.20781010610256" y1="870" x2="397.79218989389744" y2="870"/><line x1="153.50889359326482" y1="895" x2="406.4911064067352" y2="895"/><line x1="150.0961894323342" y1="920" x2="409.9038105676658" y2="920"/><line x1="151.5476742133487" y1="945" x2="408.4523257866513" y2="945"/><line x1="158.03689082349533" y1="970" x2="401.96310917650464" y2="970"/><line x1="170.45548849896676" y1="995" x2="389.54451150103324" y2="995"/><line x1="191.25880325350576" y1="1020" x2="368.7411967464942" y2="1020"/><path d="M265 1180V880Q265 772 390 772H850Q940 772 940 880V1180"/><line x1="280" y1="820" x2="1000" y2="820"/><circle cx="900" cy="925" r="130"/><path d="M780 880A125 125 0 0 1 995 830"/><path d="M505 1175V885Q505 775 615 775H830Q940 775 940 885V1175"/><rect x="440" y="880" width="30" height="20" rx="10.0"/><rect x="440" y="880" width="32" height="20" rx="9"/><rect x="440" y="930" width="32" height="20" rx="9"/><rect x="440" y="980" width="32" height="20" rx="9"/><rect x="395" y="1075" width="75" height="85" rx="12"/><circle cx="415" cy="1100" r="8"/><circle cx="415" cy="1130" r="8"/><path d="M640 875H830L860 905V1110L830 1140H640L605 1110V905Z"/><rect x="645" y="910" width="45" height="200" rx="0"/><rect x="712" y="910" width="43" height="200" rx="0"/><rect x="780" y="910" width="45" height="200" rx="0"/><line x1="505" y1="980" x2="860" y2="980"/><path d="M655 1003L669 1017M669 1003L655 1017"/><path d="M728 1003L742 1017M742 1003L728 1017"/><path d="M791 1003L805 1017M805 1003L791 1017"/><path d="M715 1073L729 1087M729 1073L715 1087"/><rect x="205" y="960" width="147" height="220" rx="0"/><line x1="265" y1="960" x2="265" y2="1180"/><line x1="205" y1="1140" x2="352" y2="1140"/><rect x="855" y="965" width="145" height="215" rx="0"/><line x1="940" y1="965" x2="940" y2="1180"/><line x1="855" y1="1140" x2="1000" y2="1140"/><path d="M271 921L285 935M285 921L271 935"/><path d="M271 1065L285 1079M285 1065L271 1079"/><path d="M271 1153L285 1167M285 1153L271 1167"/><path d="M896 921L910 935M910 921L896 935"/><path d="M915 1065L929 1079M929 1065L915 1079"/><path d="M915 1153L929 1167M929 1153L915 1167"/></g></g><clipPath id="ab9"><rect x="574" y="882.5500000000001" width="221" height="221"/></clipPath><g clip-path="url(#ab9)"><g transform="translate(570 878.5500000000001) scale(0.19166666666666668)"><path d="M130 85H350Q375 85 375 110V255Q375 280 350 280H275L272 315L240 280H135Q110 280 110 255V110Q110 85 130 85Z"/><rect x="150" y="118" width="190" height="24" rx="6"/><rect x="150" y="172" width="190" height="24" rx="6"/><rect x="150" y="227" width="93" height="25" rx="6"/><rect x="415" y="88" width="413" height="140" rx="0"/><line x1="548" y1="88" x2="548" y2="228"/><line x1="415" y1="123" x2="828" y2="123"/><line x1="415" y1="150" x2="828" y2="150"/><line x1="415" y1="178" x2="828" y2="178"/><line x1="415" y1="205" x2="828" y2="205"/><path d="M473 133L487 147M487 133L473 147"/><path d="M473 153L487 167M487 153L473 167"/><path d="M473 183L487 197M487 183L473 197"/><path d="M681 133L695 147M695 133L681 147"/><path d="M681 153L695 167M695 153L681 167"/><path d="M681 183L695 197M695 183L681 197"/><path d="M600 230H420Q150 230 150 500Q150 775 420 775H600"/><rect x="370" y="230" width="725" height="545" rx="272"/><rect x="385" y="240" width="700" height="525" rx="262"/><rect x="430" y="265" width="620" height="475" rx="237"/><circle cx="610" cy="495" r="100"/><circle cx="610" cy="495" r="80"/><circle cx="610" cy="495" r="45"/><circle cx="610" cy="495" r="30"/><circle cx="910" cy="495" r="100"/><circle cx="910" cy="495" r="80"/><circle cx="910" cy="495" r="45"/><circle cx="910" cy="495" r="30"/><circle cx="145" cy="500" r="50"/><circle cx="145" cy="500" r="35"/><circle cx="145" cy="500" r="18"/><circle cx="195" cy="500" r="75"/><rect x="145" y="485" width="160" height="30" rx="15.0"/><rect x="245" y="585" width="80" height="30" rx="15.0"/><rect x="290" y="665" width="85" height="30" rx="15.0"/><path d="M213 493L227 507M227 493L213 507"/><path d="M275 593L289 607M289 593L275 607"/><path d="M326 673L340 687M340 673L326 687"/><path d="M726 493L740 507M740 493L726 507"/><path d="M722 555Q722 548 730 548H795Q802 548 802 555V600A40 50 0 0 1 722 600Z"/><rect x="738" y="365" width="48" height="47" rx="4"/><rect x="575" y="612" width="73" height="31" rx="4"/><rect x="878" y="612" width="72" height="31" rx="4"/><path d="M270 1180V880Q270 772 390 772H850Q940 772 940 880V1180"/><path d="M505 1175V885Q505 775 615 775H830Q940 775 940 885V1175"/><rect x="100" y="795" width="105" height="260" rx="0"/><line x1="148" y1="795" x2="148" y2="1055"/><rect x="100" y="1020" width="105" height="35" rx="0"/><circle cx="145" cy="940" r="10"/><circle cx="145" cy="990" r="10"/><rect x="230" y="795" width="195" height="260" rx="0"/><rect x="232" y="822" width="168" height="208" rx="0"/><polygon points="315.0,860.0 331.45798706418924,899.3475241575014 373.9655040102995,902.8409463487533 341.6295824562643,930.6524758424986 351.4426856421333,972.1590536512467 315.0,950.0 278.5573143578667,972.1590536512467 288.3704175437357,930.6524758424986 256.0344959897005,902.8409463487533 298.54201293581076,899.3475241575014"/><path d="M275 921L289 935M289 921L275 935"/><path d="M311 921L325 935M325 921L311 935"/><rect x="205" y="960" width="147" height="220" rx="0"/><line x1="205" y1="1065" x2="352" y2="1065"/><line x1="205" y1="1090" x2="352" y2="1090"/><line x1="205" y1="1112" x2="352" y2="1112"/><line x1="205" y1="1135" x2="352" y2="1135"/><line x1="205" y1="1157" x2="352" y2="1157"/><line x1="265" y1="960" x2="265" y2="1180"/><rect x="440" y="880" width="30" height="20" rx="10.0"/><rect x="440" y="880" width="32" height="20" rx="9"/><rect x="440" y="930" width="32" height="20" rx="9"/><rect x="440" y="980" width="32" height="20" rx="9"/><rect x="395" y="1075" width="75" height="85" rx="12"/><circle cx="415" cy="1100" r="8"/><circle cx="415" cy="1130" r="8"/><path d="M640 875H830L860 905V1110L830 1140H640L605 1110V905Z"/><rect x="645" y="910" width="45" height="200" rx="0"/><rect x="712" y="910" width="43" height="200" rx="0"/><rect x="780" y="910" width="45" height="200" rx="0"/><line x1="505" y1="980" x2="860" y2="980"/><path d="M655 1003L669 1017M669 1003L655 1017"/><path d="M728 1003L742 1017M742 1003L728 1017"/><path d="M791 1003L805 1017M805 1003L791 1017"/><path d="M715 1073L729 1087M729 1073L715 1087"/><rect x="770" y="795" width="275" height="265" rx="0"/><rect x="855" y="825" width="170" height="210" rx="0"/><path d="M790 848H1105Q1130 848 1125 873L1090 1063Q1085 1088 1060 1088H735Q705 1088 712 1058L760 873Q765 848 790 848Z"/><path d="M720 1070L770 870Q775 850 800 852"/><path d="M840 1180L895 1000Q905 970 940 970H965Q990 975 982 1005L935 1180"/><rect x="858" y="1060" width="142" height="120" rx="0"/><line x1="858" y1="1085" x2="1000" y2="1085"/><line x1="858" y1="1110" x2="1000" y2="1110"/><line x1="858" y1="1135" x2="1000" y2="1135"/></g></g><clipPath id="ab10"><rect x="810" y="882.5500000000001" width="221" height="221"/></clipPath><g clip-path="url(#ab10)"><g transform="translate(806 878.5500000000001) scale(0.19166666666666668)"><path d="M278 395V630H395L278 515H345Q398 515 398 455Q398 395 345 395Z"/><rect x="450" y="395" width="122" height="237" rx="61"/><path d="M628 395V630H685Q745 630 745 572Q745 515 690 515Q745 510 745 455Q745 395 690 395Z"/><rect x="800" y="395" width="120" height="237" rx="60"/><path d="M278 890V660L338 718L398 660V890Z"/><rect x="450" y="658" width="122" height="232" rx="61"/><path d="M628 660H745V718H715V890H655V718H628Z"/><polygon points="628,340 650,310 695,310 715,340 695,370 650,370"/><rect x="742" y="310" width="88" height="60" rx="30"/><rect x="858" y="310" width="62" height="60" rx="4"/><path d="M881 336L889 344M889 336L881 344"/></g></g></g><rect x="574" y="174.1" width="221" height="221" fill="none" stroke="#8c8c8c" stroke-width="1.5"/><rect x="810" y="174.1" width="221" height="221" fill="none" stroke="#8c8c8c" stroke-width="1.5"/><rect x="1046" y="174.1" width="221" height="221" fill="none" stroke="#8c8c8c" stroke-width="1.5"/><rect x="574" y="410.25" width="221" height="221" fill="none" stroke="#8c8c8c" stroke-width="1.5"/><rect x="810" y="410.25" width="221" height="221" fill="none" stroke="#8c8c8c" stroke-width="1.5"/><rect x="1046" y="410.25" width="221" height="221" fill="none" stroke="#8c8c8c" stroke-width="1.5"/><rect x="574" y="646.4" width="221" height="221" fill="none" stroke="#8c8c8c" stroke-width="1.5"/><rect x="810" y="646.4" width="221" height="221" fill="none" stroke="#8c8c8c" stroke-width="1.5"/><rect x="1046" y="646.4" width="221" height="221" fill="none" stroke="#8c8c8c" stroke-width="1.5"/><rect x="574" y="882.5500000000001" width="221" height="221" fill="none" stroke="#8c8c8c" stroke-width="1.5"/><rect x="810" y="882.5500000000001" width="221" height="221" fill="none" stroke="#1e1e1e" stroke-width="1.5"/></svg><!-- /ART -->
<div class="a" style="left:317px;top:1062px;width:1207px;height:35px;background:linear-gradient(180deg,rgba(0,0,0,0),rgba(0,0,0,0.06))"></div>
<div class="a" style="left:1560px;top:164px;width:22px;height:933px;background:#4b4b4b"></div>
<svg class="a" style="left:1563px;top:168px" width="16" height="14"><polyline points="3,10 8,5 13,10" fill="none" stroke="#bbb" stroke-width="1.3"/></svg>
<svg class="a" style="left:1563px;top:1078px" width="16" height="14"><polyline points="3,4 8,9 13,4" fill="none" stroke="#bbb" stroke-width="1.3"/></svg>
<div class="a" style="left:1562px;top:608px;width:19px;height:33px;border-radius:10px;background:#626262"></div>
<div class="a" style="left:1582px;top:124px;width:3px;height:1000px;background:#3a3a3a"></div>



<!-- RIGHT PANELS -->
<div class="a" style="left:1585px;top:124px;width:334px;height:996px;background:#3d3d3d"></div>
<div class="a" style="left:1585px;top:125px;width:333px;height:16px;background:#454545"></div>
<svg class="a" style="left:1898px;top:128px" width="14" height="10"><polyline points="2,2 5,5 2,8" fill="none" stroke="#c8c8c8" stroke-width="1.2"/><polyline points="8,2 11,5 8,8" fill="none" stroke="#c8c8c8" stroke-width="1.2"/></svg>
<!-- Color panel -->
<div class="a" style="left:1585px;top:141px;width:333px;height:36px;background:#454545"></div>
<div class="a" style="left:1585px;top:141px;width:68px;height:36px;background:#535353"></div>
<div class="a" style="left:1654px;top:142px;width:104px;height:35px;background:#484848"></div>
<svg class="a" style="left:1591px;top:152px" width="10" height="13"><polyline points="1.5,5 5,1.5 8.5,5" fill="none" stroke="#aaa" stroke-width="1"/><polyline points="1.5,8 5,11.5 8.5,8" fill="none" stroke="#aaa" stroke-width="1"/></svg>
<div class="t ptab" style="left:1605px;top:150px;color:#fff">Color</div>
<div class="t ptab" style="left:1665px;top:150px;color:#cfcfcf">Color Guide</div>
<div class="hamb" style="left:1896px;top:154px"></div>
<div class="a" style="left:1585px;top:177px;width:333px;height:320px;background:#535353"></div>
<svg class="a" style="left:1591px;top:184px" width="20" height="20"><rect x="6" y="6" width="11" height="11" fill="#111" stroke="#eee" stroke-width="1.2"/><rect x="1.5" y="1.5" width="10" height="10" fill="#fff" stroke="#111" stroke-width="1.5"/></svg>
<svg class="a" style="left:1619px;top:186px" width="18" height="18"><path d="M3 6h7a4 4 0 0 1 4 4v5" fill="none" stroke="#cfcfcf" stroke-width="2"/><polyline points="6,2 2,6 6,10" fill="none" stroke="#cfcfcf" stroke-width="2"/><polyline points="10,12 14,16 18,12" fill="none" stroke="#cfcfcf" stroke-width="2"/></svg>
<div class="a" style="left:1606px;top:222px;width:26px;height:26px;background:#fff;border:1px solid #111"></div>
<div class="a" style="left:1612px;top:228px;width:14px;height:14px;background:#444;border:1px solid #111"></div>
<svg class="a" style="left:1606px;top:222px" width="26" height="26"><line x1="2" y1="25" x2="25" y2="2" stroke="#ef1111" stroke-width="2.4"/></svg>
<div class="a" style="left:1592px;top:209px;width:27px;height:27px;background:#fff;border:1.5px solid #111"></div>
<div class="t" style="left:1655px;top:195px;font-size:14px;color:#ddd">R</div>
<div class="t" style="left:1655px;top:239px;font-size:14px;color:#ddd">G</div>
<div class="t" style="left:1655px;top:283px;font-size:14px;color:#ddd">B</div>
<div class="a" style="left:1680px;top:200px;width:148px;height:4px;background:linear-gradient(90deg,#00f0ff 0%,#10f2ff 45%,#fff 100%)"></div>
<div class="a" style="left:1680px;top:244px;width:148px;height:4px;background:linear-gradient(90deg,#ff10ff 0%,#ff60ff 45%,#fff 100%)"></div>
<div class="a" style="left:1680px;top:288px;width:148px;height:4px;background:linear-gradient(90deg,#ffff00 0%,#ffff30 45%,#fff 100%)"></div>
<svg class="a" style="left:1821px;top:203px" width="14" height="12"><path d="M1 5l6-4 6 4v6H1z" fill="#c8c8c8"/></svg>
<svg class="a" style="left:1821px;top:247px" width="14" height="12"><path d="M1 5l6-4 6 4v6H1z" fill="#c8c8c8"/></svg>
<svg class="a" style="left:1821px;top:291px" width="14" height="12"><path d="M1 5l6-4 6 4v6H1z" fill="#c8c8c8"/></svg>
<div class="a pin" style="left:1839px;top:188px;width:47px;height:27px"></div><div class="t" style="left:1845px;top:193px;font-size:15px;color:#f0f0f0">255</div>
<div class="a pin" style="left:1839px;top:232px;width:47px;height:27px"></div><div class="t" style="left:1845px;top:237px;font-size:15px;color:#f0f0f0">255</div>
<div class="a pin" style="left:1839px;top:276px;width:47px;height:27px"></div><div class="t" style="left:1845px;top:281px;font-size:15px;color:#f0f0f0">255</div>
<div class="a" style="left:1593px;top:330px;width:52px;height:18px;border:1px solid #222;background:linear-gradient(90deg,#fff 0,#fff 33%,#000 33%,#000 66%,#fff 66%)"></div>
<svg class="a" style="left:1594px;top:331px" width="17" height="16"><line x1="1" y1="15" x2="16" y2="1" stroke="#ef1111" stroke-width="2"/></svg>
<div class="t" style="left:1796px;top:332px;font-size:15px;color:#cfcfcf">#</div>
<div class="a pin" style="left:1810px;top:327px;width:86px;height:25px"></div><div class="t" style="left:1817px;top:332px;font-size:15px;color:#f0f0f0">ffffff</div>
<div class="a" style="left:1594px;top:362px;width:301px;height:126px;border:1px solid #222;overflow:hidden">
  <div class="a" style="left:0;top:0;width:100%;height:100%;background:linear-gradient(90deg,#f00 0%,#f00 3%,#ff0 17%,#0f0 28%,#0f0 38%,#0ff 50%,#00f 67%,#f0f 82%,#f00 97%,#f00 100%)"></div>
  <div class="a" style="left:0;top:0;width:100%;height:100%;background:linear-gradient(180deg,#fff 0%,rgba(255,255,255,0) 40%,rgba(0,0,0,0) 55%,#000 100%)"></div>
</div>
<!-- Gradient panel -->
<div class="a" style="left:1585px;top:501px;width:333px;height:36px;background:#454545"></div>
<div class="a" style="left:1586px;top:502px;width:96px;height:35px;background:#484848"></div>
<div class="a" style="left:1683px;top:501px;width:89px;height:36px;background:#535353"></div>
<div class="t ptab" style="left:1597px;top:510px;color:#cfcfcf">Comments</div>
<svg class="a" style="left:1689px;top:512px" width="10" height="13"><polyline points="1.5,5 5,1.5 8.5,5" fill="none" stroke="#aaa" stroke-width="1"/><polyline points="1.5,8 5,11.5 8.5,8" fill="none" stroke="#aaa" stroke-width="1"/></svg>
<div class="t ptab" style="left:1703px;top:510px;color:#fff">Gradient</div>
<div class="hamb" style="left:1896px;top:514px"></div>
<div class="a" style="left:1585px;top:537px;width:333px;height:320px;background:#535353"></div>
<div class="a" style="left:1592px;top:545px;width:42px;height:42px;border:1px solid #222;background:linear-gradient(90deg,#fff,#222)"></div>
<svg class="a" style="left:1637px;top:563px" width="9" height="6"><path d="M0 0h8l-4 5z" fill="#ccc"/></svg>
<div class="a" style="left:1606px;top:610px;width:26px;height:26px;background:#fff;border:1px solid #111"></div>
<div class="a" style="left:1612px;top:616px;width:14px;height:14px;background:#444;border:1px solid #111"></div>
<svg class="a" style="left:1606px;top:610px" width="26" height="26"><line x1="2" y1="25" x2="25" y2="2" stroke="#ef1111" stroke-width="2.4"/></svg>
<div class="a" style="left:1592px;top:596px;width:27px;height:27px;background:#fff;border:1.5px solid #111"></div>
<svg class="a" style="left:1598px;top:650px" width="22" height="20"><rect x="2" y="1" width="11" height="7" fill="#777" stroke="#888"/><path d="M15 3h6l-3 4z" fill="#777"/><rect x="9" y="12" width="11" height="7" fill="#777" stroke="#888"/><path d="M1 18h6l-3-4z" fill="#777"/></svg>
<div class="t" style="left:1667px;top:552px;font-size:15px;color:#e0e0e0">Type:</div>
<div class="a" style="left:1707px;top:545px;width:98px;height:32px;border:1px solid #4a4a4a;border-radius:3px"></div>
<div class="a gbtn" style="left:1712px;top:549px;background:linear-gradient(90deg,#555,#eee)"></div>
<div class="a gbtn" style="left:1745px;top:549px;background:radial-gradient(circle,#fff 0,#888 90%)"></div>
<div class="a gbtn" style="left:1778px;top:549px;background:radial-gradient(circle at 40% 50%,#eee 0,#777 60%,#444 100%)"></div>
<div class="t" style="left:1657px;top:591px;font-size:15px;color:#8c8c8c">Stroke:</div>
<div class="a" style="left:1707px;top:584px;width:90px;height:29px;border:1px solid #4c4c4c;border-radius:3px"></div>
<svg class="a" style="left:1710px;top:587px" width="86" height="24"><g fill="none" stroke="#6a6a6a" stroke-width="4"><path d="M6 20V6h14v8h-6v6"/><path d="M36 20V6h14"/><path d="M66 20V6h14v4"/></g><line x1="29" y1="1" x2="29" y2="23" stroke="#4c4c4c"/><line x1="59" y1="1" x2="59" y2="23" stroke="#4c4c4c"/></svg>
<svg class="a" style="left:1680px;top:624px" width="22" height="18"><path d="M2 16h18M2 16L16 3M12 16a8 8 0 0 0-3-6" fill="none" stroke="#8a8a8a" stroke-width="1.3"/></svg>
<div class="a pdis" style="left:1707px;top:620px;width:103px;height:28px"></div>
<svg class="a" style="left:1788px;top:630px" width="14" height="10"><polyline points="2,2 7,7 12,2" fill="none" stroke="#777" stroke-width="1.3"/></svg>
<svg class="a" style="left:1678px;top:655px" width="26" height="24"><path d="M3 2v20M1 5l2-3 2 3M1 19l2 3 2-3" fill="none" stroke="#8a8a8a" stroke-width="1.3"/><ellipse cx="15" cy="12" rx="8" ry="5" fill="none" stroke="#8a8a8a" stroke-width="1.3"/><path d="M7 22h16M7 20v4M23 20v4" fill="none" stroke="#8a8a8a" stroke-width="1.3"/></svg>
<div class="a pdis" style="left:1707px;top:655px;width:103px;height:28px"></div>
<svg class="a" style="left:1788px;top:665px" width="14" height="10"><polyline points="2,2 7,7 12,2" fill="none" stroke="#777" stroke-width="1.3"/></svg>
<div class="a" style="left:1605px;top:709px;width:264px;height:54px;border:1.5px solid #2a2a2a;background:linear-gradient(90deg,#fff 0%,#9a9a9a 50%,#231f20 100%)"></div>
<svg class="a" style="left:1886px;top:713px" width="18" height="22"><path d="M2 5h14M6 5V2h6v3M4 6l1 14h8l1-14M7 8v10M9 8v10M11 8v10" fill="none" stroke="#707070" stroke-width="1.4"/></svg>
<svg class="a" style="left:1599px;top:806px" width="26" height="26"><path d="M3 23l2-6 10-10 4 4-10 10z M15 7l3-3a2 2 0 0 1 3 0l1 1a2 2 0 0 1 0 3l-3 3" fill="none" stroke="#7a7a7a" stroke-width="1.6"/></svg>
<div class="t" style="left:1650px;top:795px;font-size:15px;color:#8c8c8c">Opacity:</div>
<div class="a pdis" style="left:1707px;top:788px;width:103px;height:28px"></div>
<svg class="a" style="left:1788px;top:798px" width="14" height="10"><polyline points="2,2 7,7 12,2" fill="none" stroke="#777" stroke-width="1.3"/></svg>
<div class="t" style="left:1643px;top:830px;font-size:15px;color:#8c8c8c">Location:</div>
<div class="a pdis" style="left:1707px;top:823px;width:103px;height:28px"></div>
<svg class="a" style="left:1788px;top:833px" width="14" height="10"><polyline points="2,2 7,7 12,2" fill="none" stroke="#777" stroke-width="1.3"/></svg>
<!-- Transparency -->
<div class="a" style="left:1585px;top:861px;width:333px;height:36px;background:#454545"></div>
<div class="a" style="left:1586px;top:862px;width:66px;height:35px;background:#484848"></div>
<div class="a" style="left:1653px;top:861px;width:124px;height:36px;background:#535353"></div>
<div class="t ptab" style="left:1597px;top:870px;color:#cfcfcf">Stroke</div>
<svg class="a" style="left:1659px;top:872px" width="10" height="13"><polyline points="1.5,5 5,1.5 8.5,5" fill="none" stroke="#aaa" stroke-width="1"/><polyline points="1.5,8 5,11.5 8.5,8" fill="none" stroke="#aaa" stroke-width="1"/></svg>
<div class="t ptab" style="left:1673px;top:870px;color:#fff">Transparency</div>
<div class="hamb" style="left:1896px;top:874px"></div>
<div class="a" style="left:1585px;top:897px;width:333px;height:140px;background:#535353"></div>
<div class="a pin" style="left:1593px;top:906px;width:132px;height:26px;background:#4a4a4a"></div>
<div class="t" style="left:1601px;top:912px;font-size:15px;color:#f0f0f0">Normal</div>
<svg class="a" style="left:1704px;top:914px" width="14" height="10"><polyline points="2,2 7,7 12,2" fill="none" stroke="#ddd" stroke-width="1.5"/></svg>
<div class="t" style="left:1732px;top:912px;font-size:15px;color:#cfcfcf">Opacity:</div>
<div class="a pin" style="left:1790px;top:906px;width:103px;height:26px;background:#4e4e4e"></div>
<div class="a" style="left:1791px;top:907px;width:78px;height:24px;background:#454545;border-right:1px solid #3a3a3a"></div>
<div class="t" style="left:1795px;top:912px;font-size:15px;color:#f2f2f2">100%</div>
<svg class="a" style="left:1873px;top:911px" width="14" height="16"><polyline points="4,3 10,8 4,13" fill="none" stroke="#d8d8d8" stroke-width="1.6"/></svg>
<div class="a" style="left:1592px;top:941px;width:320px;height:1px;background:#4a4a4a"></div>
<div class="a" style="left:1593px;top:953px;width:180px;height:73px;border:1px solid #4c4c4c;border-radius:3px;background:#525252"></div>
<div class="a pdis" style="left:1778px;top:950px;width:112px;height:26px"></div>
<div class="t" style="left:1798px;top:956px;font-size:15px;color:#888">Make Mask</div>
<div class="a" style="left:1779px;top:985px;width:15px;height:15px;border:1px solid #6a6a6a;border-radius:2px"></div>
<div class="t" style="left:1801px;top:986px;font-size:15px;color:#8a8a8a">Clip</div>
<div class="a" style="left:1779px;top:1011px;width:15px;height:15px;border:1px solid #6a6a6a;border-radius:2px"></div>
<div class="t" style="left:1801px;top:1012px;font-size:15px;color:#8a8a8a">Invert Mask</div>
<!-- Character -->
<div class="a" style="left:1585px;top:1040px;width:333px;height:36px;background:#454545"></div>
<div class="a" style="left:1585px;top:1040px;width:98px;height:36px;background:#535353"></div>
<div class="a" style="left:1684px;top:1041px;width:92px;height:35px;background:#484848"></div>
<div class="a" style="left:1777px;top:1041px;width:89px;height:35px;background:#484848"></div>
<svg class="a" style="left:1591px;top:1051px" width="10" height="13"><polyline points="1.5,5 5,1.5 8.5,5" fill="none" stroke="#aaa" stroke-width="1"/><polyline points="1.5,8 5,11.5 8.5,8" fill="none" stroke="#aaa" stroke-width="1"/></svg>
<div class="t ptab" style="left:1605px;top:1049px;color:#fff">Character</div>
<div class="t ptab" style="left:1695px;top:1049px;color:#cfcfcf">Paragraph</div>
<div class="t ptab" style="left:1788px;top:1049px;color:#cfcfcf">OpenType</div>
<div class="hamb" style="left:1896px;top:1052px"></div>
<!-- Properties -->
<div class="a" style="left:1585px;top:1081px;width:333px;height:36px;background:#454545"></div>
<div class="a" style="left:1586px;top:1082px;width:46px;height:35px;background:#484848;overflow:hidden"><div class="t ptab" style="left:11px;top:8px;color:#cfcfcf">Properties</div></div>
<div class="a" style="left:1633px;top:1082px;width:47px;height:35px;background:#484848;overflow:hidden"><div class="t ptab" style="left:10px;top:8px;color:#cfcfcf">Layers</div></div>
<div class="a" style="left:1681px;top:1082px;width:45px;height:35px;background:#484848;overflow:hidden"><div class="t ptab" style="left:9px;top:8px;color:#cfcfcf">Libraries</div></div>
<div class="a" style="left:1727px;top:1081px;width:90px;height:36px;background:#535353"></div>
<div class="t ptab" style="left:1737px;top:1089px;color:#fff">Artboards</div>
<div class="a" style="left:1818px;top:1082px;width:48px;height:35px;background:#484848;overflow:hidden"><div class="t ptab" style="left:11px;top:8px;color:#cfcfcf">Assets</div></div>
<div class="hamb" style="left:1896px;top:1092px"></div>

<!-- STATUS BAR -->
<div class="a" style="left:0;top:1097px;width:1582px;height:23px;background:#434343;border-top:1px solid #2e2e2e"></div>
<div class="a" style="left:104px;top:1098px;width:67px;height:22px;background:#3d3d3d"></div>
<div class="a" style="left:171px;top:1098px;width:23px;height:22px;background:#474747;border-left:1px solid #3a3a3a"></div>
<div class="t" style="left:108px;top:1103px;font-size:15px;color:#f0f0f0">0°</div>
<svg class="a" style="left:175px;top:1106px" width="14" height="10"><polyline points="2,2 7,7 12,2" fill="none" stroke="#ddd" stroke-width="1.5"/></svg>
<div class="a" style="left:195px;top:1098px;width:55px;height:22px;background:#474747;border-left:1px solid #3a3a3a"></div>
<svg class="a" style="left:205px;top:1102px" width="40" height="14"><rect x="1" y="1" width="2" height="11" fill="#aaa"/><path d="M12 1v11l-8-5.5z" fill="#aaa"/><path d="M36 1v11l-8-5.5z" fill="#aaa"/></svg>
<div class="a" style="left:251px;top:1098px;width:53px;height:22px;background:#3d3d3d"></div>
<div class="t" style="left:255px;top:1103px;font-size:15px;color:#f0f0f0">11</div>
<div class="a" style="left:304px;top:1098px;width:24px;height:22px;background:#474747;border-left:1px solid #3a3a3a"></div>
<svg class="a" style="left:308px;top:1106px" width="14" height="10"><polyline points="2,2 7,7 12,2" fill="none" stroke="#ddd" stroke-width="1.5"/></svg>
<div class="a" style="left:328px;top:1098px;width:56px;height:22px;background:#474747;border-left:1px solid #3a3a3a"></div>
<svg class="a" style="left:338px;top:1102px" width="40" height="14"><path d="M1 1v11l8-5.5z" fill="#6a6a6a"/><path d="M22 1v11l8-5.5z" fill="#6a6a6a"/><rect x="31" y="1" width="2" height="11" fill="#6a6a6a"/></svg>
<div class="t" style="left:442px;top:1103px;font-size:15px;color:#c8c8c8">Toggle Direct Selection</div>
<div class="a" style="left:650px;top:1098px;width:24px;height:22px;background:#474747"></div>
<svg class="a" style="left:657px;top:1102px" width="12" height="14"><path d="M2 1v12l8-6z" fill="#bbb"/></svg>
<svg class="a" style="left:680px;top:1101px" width="12" height="14"><polyline points="8,2 3,7 8,12" fill="none" stroke="#aaa" stroke-width="1.2"/></svg>
<div class="a" style="left:1006px;top:1100px;width:34px;height:18px;border-radius:9px;background:#5a5a5a"></div>
<svg class="a" style="left:1542px;top:1101px" width="12" height="14"><polyline points="3,2 8,7 3,12" fill="none" stroke="#aaa" stroke-width="1.2"/></svg>
<div class="a" style="left:1560px;top:1097px;width:22px;height:23px;background:#4b4b4b"></div>

<!-- PATHFINDER PANEL -->
<div class="a" style="left:95px;top:685px;width:159px;height:199px;background:#535353;border-radius:0 6px 0 0;box-shadow:0 0 4px rgba(0,0,0,.35)"></div>
<div class="a" style="left:95px;top:685px;width:159px;height:18px;background:#474747;border-radius:0 6px 0 0;border-bottom:1px solid #3a3a3a"></div>
<svg class="a" style="left:233px;top:689px" width="14" height="10"><path d="M6 2L3 5l3 3M11 2L8 5l3 3" fill="none" stroke="#cfcfcf" stroke-width="1.2"/></svg>
<div class="a" style="left:95px;top:703px;width:159px;height:37px;background:#464646;border-bottom:1px solid #3c3c3c"></div>
<div class="hamb" style="left:231px;top:716px"></div>
<svg class="a" style="left:100px;top:781px" width="21" height="22"><rect x="1.5" y="1.5" width="11" height="11" fill="#cfcfcf" stroke="#535353" stroke-width="0"/><rect x="7" y="7" width="12" height="13" fill="#cfcfcf"/><rect x="6" y="6" width="7" height="7" fill="#333"/></svg>
<div class="a" style="left:143px;top:778px;width:104px;height:26px;background:#575757;border-radius:3px"></div>
<div class="t" style="left:170px;top:784px;font-size:15px;color:#8c8c8c">Expand</div>
<svg class="a" style="left:108px;top:850px" width="130" height="22">
 <g fill="none" stroke="#cfcfcf" stroke-width="1.3"><rect x="1" y="1" width="12" height="12"/><rect x="7" y="7" width="12" height="12"/></g><rect x="7" y="7" width="6" height="6" fill="#cfcfcf"/>
 <g fill="none" stroke="#cfcfcf" stroke-width="1.3"><rect x="53" y="1" width="12" height="12"/><rect x="59" y="7" width="12" height="12"/><rect x="59" y="7" width="6" height="6"/></g>
 <rect x="105" y="1" width="12" height="12" fill="none" stroke="#cfcfcf" stroke-width="1.5"/><path d="M111 7h12v12h-12z" fill="#cfcfcf"/><rect x="105" y="1" width="12" height="12" fill="#535353" stroke="#cfcfcf" stroke-width="1.5"/>
</svg>
<!-- TRANSFORM PANEL -->
<div class="a" style="left:116px;top:885px;width:143px;height:148px;background:#535353;border-radius:6px 6px 0 0;box-shadow:0 1px 6px rgba(0,0,0,.45);border:1px solid #3a3a3a"></div>
<div class="a" style="left:117px;top:886px;width:141px;height:18px;background:#474747;border-radius:6px 6px 0 0;border-bottom:1px solid #3a3a3a"></div>
<svg class="a" style="left:122px;top:889px" width="12" height="12"><path d="M2 2l8 8M10 2l-8 8" stroke="#cfcfcf" stroke-width="1.3"/></svg>
<svg class="a" style="left:237px;top:890px" width="14" height="10"><path d="M3 2l3 3-3 3M8 2l3 3-3 3" fill="none" stroke="#cfcfcf" stroke-width="1.2"/></svg>
<svg class="a" style="left:173px;top:908px" width="28" height="7"><g fill="#333"><rect x="1" y="0" width="1.3" height="6"/><rect x="4" y="0" width="1.3" height="6"/><rect x="7" y="0" width="1.3" height="6"/><rect x="10" y="0" width="1.3" height="6"/><rect x="13" y="0" width="1.3" height="6"/><rect x="16" y="0" width="1.3" height="6"/><rect x="19" y="0" width="1.3" height="6"/><rect x="22" y="0" width="1.3" height="6"/><rect x="25" y="0" width="1.3" height="6"/></g></svg>
<svg class="a" style="left:132px;top:924px" width="22" height="22"><rect x="3" y="3" width="16" height="16" fill="none" stroke="#cfcfcf" stroke-width="1.6" stroke-dasharray="3 2"/><g fill="#cfcfcf"><rect x="1" y="1" width="4" height="4"/><rect x="17" y="1" width="4" height="4"/><rect x="1" y="17" width="4" height="4"/><rect x="17" y="17" width="4" height="4"/><rect x="9" y="1" width="4" height="3"/><rect x="9" y="18" width="4" height="3"/><circle cx="11" cy="11" r="1.2"/></g></svg>
<div class="t" style="left:167px;top:927px;font-size:15px;color:#f4f4f4;font-weight:bold">Transform</div>
<svg class="a" style="left:132px;top:960px" width="22" height="26"><rect x="1" y="1" width="1.5" height="24" fill="#cfcfcf"/><rect x="5" y="5" width="9" height="7" fill="#cfcfcf"/><rect x="5" y="14" width="15" height="7" fill="#cfcfcf"/></svg>
<div class="t" style="left:167px;top:964px;font-size:15px;color:#f4f4f4;font-weight:bold">Align</div>
<div class="t" style="left:132px;top:998px;font-size:24px;color:#cfcfcf;font-family:'Liberation Serif',serif;font-style:italic">A</div>
<div class="t" style="left:167px;top:1002px;font-size:15px;color:#f4f4f4;font-weight:bold">Glyphs</div>
<!-- TOOLBAR -->
<svg class="a" style="left:0;top:508px" width="95" height="692" viewBox="0 508 95 692"><rect x="0" y="508" width="95" height="692" fill="#535353"/><path d="M0 508h89a6 6 0 0 1 6 6v11H0z" fill="#474747"/><rect x="0" y="525" width="95" height="1" fill="#3c3c3c"/><path d="M8 514l8 8M16 514l-8 8" stroke="#cfcfcf" stroke-width="1.4"/><path d="M80 515l-3 3 3 3M85 515l-3 3 3 3" fill="none" stroke="#cfcfcf" stroke-width="1.2"/><rect x="35" y="530" width="1.3" height="6" fill="#333"/><rect x="38" y="530" width="1.3" height="6" fill="#333"/><rect x="41" y="530" width="1.3" height="6" fill="#333"/><rect x="44" y="530" width="1.3" height="6" fill="#333"/><rect x="47" y="530" width="1.3" height="6" fill="#333"/><rect x="50" y="530" width="1.3" height="6" fill="#333"/><rect x="53" y="530" width="1.3" height="6" fill="#333"/><rect x="56" y="530" width="1.3" height="6" fill="#333"/><rect x="59" y="530" width="1.3" height="6" fill="#333"/><rect x="10" y="553" width="36" height="30" rx="3" fill="#323232"/><path d="M22 558v20l4-4 4 0z" fill="none"/><path d="M22 557L37 572h-8l-7 7z" fill="none" stroke="#e0e0e0" stroke-width="1.5" stroke-linejoin="round"/><path d="M61 557L77 573h-9l-7 7z" fill="#cfcfcf"/><path d="M81 581.5h5v-5z" fill="#cfcfcf"/><path d="M18 611l13-13" stroke="#cfcfcf" stroke-width="2.4"/><path d="M22 593l1 2 2 1-2 1-1 2-1-2-2-1 2-1zM34 591l1 2 2 1-2 1-1 2-1-2-2-1 2-1zM36 601l.7 1.3 1.3.7-1.3.7-.7 1.3-.7-1.3-1.3-.7 1.3-.7z" fill="#cfcfcf"/><path d="M68 593.5L81 606.5h-6.5L68 612z" fill="#cfcfcf"/><path d="M77.5 599.5c1-5-5-8-11-8s-10 3-10 7c0 2 1 3 2 4" fill="none" stroke="#cfcfcf" stroke-width="1.3"/><circle cx="61.5" cy="602.5" r="2.2" fill="none" stroke="#cfcfcf" stroke-width="1.2"/><path d="M62 605c2 1 2 3 0 5l-1.5 1" fill="none" stroke="#cfcfcf" stroke-width="1.2"/><path d="M17 643l4-10 7-5 4 4-5 7z" fill="#cfcfcf"/><path d="M29 626l3-3 5 5-3 3z" fill="#cfcfcf"/><circle cx="25" cy="636" r="1.3" fill="#535353"/><path d="M41 645.5h5v-5z" fill="#cfcfcf"/><path d="M60 643l4-10 7-5 4 4-5 7z" fill="#cfcfcf"/><path d="M72 626l3-3 5 5-3 3z" fill="#cfcfcf"/><path d="M57 622c3 0 3 4 1 8s-2 9 2 11" fill="none" stroke="#cfcfcf" stroke-width="1.3"/><path d="M19 654h18v5h-1.5l-1-3h-5v14h3v1.5h-8V670h3V656h-5l-1 3H19z" fill="#cfcfcf"/><path d="M41 677.5h5v-5z" fill="#cfcfcf"/><path d="M58 674l19-19" stroke="#cfcfcf" stroke-width="1.6"/><path d="M81 677.5h5v-5z" fill="#cfcfcf"/><rect x="18" y="685" width="20" height="20" fill="#6a6a6a" stroke="#cfcfcf" stroke-width="1.6"/><path d="M41 709.5h5v-5z" fill="#cfcfcf"/><path d="M58 706c0-5 3-8 7-8l3 3c0 4-4 6-10 5zM66 699l11-12c1-1 2 0 1 1l-8 13z" fill="#cfcfcf"/><path d="M81 709.5h5v-5z" fill="#cfcfcf"/><path d="M21 737a7 7 0 1 1 9-9" fill="#6a6a6a" stroke="#cfcfcf" stroke-width="1.5"/><path d="M25 736l14-14 3 3-14 14-4 1z" fill="#cfcfcf"/><path d="M41 741.5h5v-5z" fill="#cfcfcf"/><path d="M58 729l11-11 9 9-11 11z" fill="#cfcfcf"/><path d="M58 729l4-4 9 9-4 4z" fill="#535353" stroke="#cfcfcf" stroke-width="1.4"/><path d="M81 741.5h5v-5z" fill="#cfcfcf"/><path d="M20 754a9 9 0 1 1 0 12" fill="none" stroke="#cfcfcf" stroke-width="1.6" stroke-dasharray="1.5 2.2"/><path d="M21 752a9 9 0 0 1 17 6" fill="none" stroke="#cfcfcf" stroke-width="1.8"/><path d="M18 750l0 7 7-1z" fill="#cfcfcf"/><path d="M41 773.5h5v-5z" fill="#cfcfcf"/><rect x="56" y="759" width="12" height="12" fill="none" stroke="#cfcfcf" stroke-width="1.5"/><rect x="62" y="750" width="17" height="15" fill="none" stroke="#cfcfcf" stroke-width="1.5"/><path d="M70 761l6-6M72 755h4v4" fill="none" stroke="#cfcfcf" stroke-width="1.3"/><path d="M81 773.5h5v-5z" fill="#cfcfcf"/><path d="M19.5 786.5c0-3 3-4 4.5-1.5 1.5 2.5-.5 5 1.5 7 2 1.5 5 .5 7-2 2.5-3 7.5-2 7.5 3.5 0 2-1 3-1.5 3.5-.5-3-2-5-4-4-2.5 1.5-4 5-8.5 5.5-3 .3-5-1.5-5-4 0-2.5 1-3.5 0-5.5-.5-1-1.5-1.5-1-2.5z" fill="#cfcfcf"/><path d="M18 799.5L31 785.5" stroke="#535353" stroke-width="2.4"/><path d="M18 799.5L31 785.5" stroke="#cfcfcf" stroke-width="1"/><circle cx="18" cy="799.5" r="1.8" fill="#535353" stroke="#cfcfcf" stroke-width="1.1"/><circle cx="31" cy="785.5" r="1.8" fill="#535353" stroke="#cfcfcf" stroke-width="1.1"/><circle cx="24" cy="793" r="1.5" fill="#535353" stroke="#cfcfcf"/><path d="M41 805.5h5v-5z" fill="#cfcfcf"/><path d="M56 780.5L69 792.5h-7l-6 7.5z" fill="#cfcfcf"/><path d="M63.5 792.5V799.5H80V784H63.5" fill="none" stroke="#cfcfcf" stroke-width="1.3"/><g fill="#cfcfcf"><circle cx="64" cy="784" r="1.3"/><circle cx="72" cy="783.5" r="1.3"/><circle cx="80" cy="784" r="1.3"/><circle cx="80.5" cy="792" r="1.3"/><circle cx="80" cy="800" r="1.3"/><circle cx="72" cy="800.5" r="1.3"/><circle cx="64" cy="800" r="1.3"/></g><path d="M81 807.5h5v-5z" fill="#cfcfcf"/><path d="M22 828a6 6 0 1 1 1-11.5 8 8 0 0 1 14 5" fill="none" stroke="#cfcfcf" stroke-width="1.3"/><path d="M23 816.5a6 6 0 0 1 0 11.5M22 828c2 2 5 2.5 8 2" fill="none" stroke="#cfcfcf" stroke-width="1.1"/><path d="M18 822h12" stroke="#cfcfcf" stroke-width="1.3" stroke-dasharray="1.3 1.3"/><path d="M32 821.5l10 8.5h-5.5l-4.5 6z" fill="#cfcfcf"/><path d="M41 837.5h5v-5z" fill="#cfcfcf"/><path d="M62 824h11M62 828h13M62 831.5h15M62 835h17" stroke="#8a8a8a" stroke-width="1.3"/><path d="M56.5 813.5v21l13-11.5v-6.5zM56.5 824l13-1M62 815v15M65.5 816v11" fill="none" stroke="#cfcfcf" stroke-width="1.2"/><path d="M81 837.5h5v-5z" fill="#cfcfcf"/><rect x="17" y="846" width="22" height="19" fill="none" stroke="#cfcfcf" stroke-width="1.6"/><path d="M18 856c6-4 10 2 20-4M22 865c0-8 6-12 10-18M30 865c0-6 4-8 8-10" fill="none" stroke="#cfcfcf" stroke-width="1.2"/><defs><linearGradient id="tg" x1="0" x2="1"><stop offset="0" stop-color="#111"/><stop offset="1" stop-color="#eee"/></linearGradient></defs><rect x="57" y="846" width="22" height="19" fill="url(#tg)" stroke="#cfcfcf" stroke-width="1.6"/><path d="M18 898l12-12 3 3-12 12-3 1z" fill="none" stroke="#cfcfcf" stroke-width="1.6"/><path d="M29 882l3-3a2 2 0 0 1 3 3l-3 3 1 1-3 3-4-4 3-3z" fill="#cfcfcf"/><path d="M41 901.5h5v-5z" fill="#cfcfcf"/><rect x="56" y="879" width="9" height="9" fill="#cfcfcf"/><circle cx="68" cy="887" r="6" fill="#8a8a8a" stroke="#cfcfcf" stroke-width="1.3"/><circle cx="75" cy="891" r="6" fill="#535353" stroke="#cfcfcf" stroke-width="1.5"/><g fill="#cfcfcf"><rect x="16" y="910" width="2" height="2"/><rect x="20" y="910" width="2" height="2"/><rect x="24" y="910" width="2" height="2"/><rect x="16" y="914" width="2" height="2"/><rect x="20" y="914" width="2" height="2"/><rect x="16" y="918" width="2" height="2"/></g><rect x="27" y="913" width="12" height="17" rx="1.5" fill="none" stroke="#cfcfcf" stroke-width="1.5"/><rect x="30" y="910" width="6" height="3" fill="#cfcfcf"/><circle cx="33" cy="922" r="3" fill="none" stroke="#cfcfcf" stroke-width="1.5"/><path d="M41 933.5h5v-5z" fill="#cfcfcf"/><path d="M56 910v20h24" fill="none" stroke="#cfcfcf" stroke-width="1.4"/><g fill="#cfcfcf"><rect x="61" y="919" width="4" height="11"/><rect x="67" y="911" width="4" height="19"/><rect x="74" y="914" width="4" height="16"/></g><path d="M81 933.5h5v-5z" fill="#cfcfcf"/><path d="M15 947h8M21 940v8" stroke="#cfcfcf" stroke-width="1.3"/><path d="M21 945h12l5 5v11H21z" fill="#6a6a6a" stroke="#cfcfcf" stroke-width="1.5"/><path d="M57 962l13-13 4 4z" fill="none" stroke="#cfcfcf" stroke-width="1.5"/><path d="M70 948l4-6 5 5-5 5z" fill="#cfcfcf"/><path d="M81 965.5h5v-5z" fill="#cfcfcf"/><path d="M25 995.5c-3 0-5-2.5-7.5-6-1-1.5 0-3 1.5-2.2l2.8 2.2V978.5a1.4 1.4 0 0 1 2.8 0v7.5V975.5a1.4 1.4 0 0 1 2.8 0v10.5V976.5a1.4 1.4 0 0 1 2.8 0v9.5V979a1.4 1.4 0 0 1 2.8 0v9c0 4.5-3 7.5-6.5 7.5z" fill="#cfcfcf"/><path d="M41 997.5h5v-5z" fill="#cfcfcf"/><circle cx="66" cy="981" r="7.5" fill="none" stroke="#cfcfcf" stroke-width="1.6"/><path d="M71 986l7 8" stroke="#cfcfcf" stroke-width="2.4"/><rect x="8" y="1004" width="80" height="1" fill="#4a4a4a"/><rect x="33" y="1034" width="46" height="46" fill="#fff" stroke="#222" stroke-width="1.5"/><rect x="46" y="1047" width="20" height="20" fill="#535353" stroke="#222" stroke-width="1.5"/><path d="M34 1079L78 1035" stroke="#f00" stroke-width="2.2"/><rect x="8.5" y="1009.5" width="47" height="47" fill="#fff" stroke="#222" stroke-width="1.5"/><path d="M69 1016h5a4 4 0 0 1 4 4v4" fill="none" stroke="#cfcfcf" stroke-width="2"/><path d="M71 1012l-3 4 3 4M75 1022l3 4 3-4" fill="none" stroke="#cfcfcf" stroke-width="1.8"/><rect x="10" y="1069" width="8" height="8" fill="#111" stroke="#eee" stroke-width="1"/><rect x="14" y="1073" width="8" height="8" fill="#111" stroke="#eee"/><rect x="9.5" y="1068.5" width="7" height="7" fill="#fff" stroke="#111"/><rect x="9" y="1090" width="77" height="27" rx="3" fill="none" stroke="#4a4a4a"/><rect x="10" y="1091" width="23" height="25" fill="#3f3f3f"/><line x1="34" y1="1091" x2="34" y2="1116" stroke="#4a4a4a"/><line x1="61" y1="1091" x2="61" y2="1116" stroke="#4a4a4a"/><rect x="13" y="1096" width="15" height="15" fill="#fff" stroke="#111" stroke-width="1.5"/><rect x="40" y="1096" width="15" height="15" fill="url(#tg)" stroke="#111" stroke-width="1.5"/><rect x="66" y="1096" width="15" height="15" fill="#eee" stroke="#111" stroke-width="1.5"/><path d="M67 1110l13-13" stroke="#f00" stroke-width="2"/><rect x="9" y="1124" width="50" height="24" rx="3" fill="none" stroke="#4a4a4a"/><rect x="10" y="1125" width="23" height="22" fill="#3f3f3f"/><circle cx="20" cy="1134" r="5" fill="#666" stroke="#cfcfcf" stroke-width="1.3"/><rect x="21" y="1135" width="7" height="7" fill="#cfcfcf"/><circle cx="46" cy="1134" r="5" fill="#666" stroke="#cfcfcf" stroke-width="1.3"/><rect x="34" y="1164" width="20" height="15" fill="#6a6a6a" stroke="#cfcfcf" stroke-width="1.3"/><rect x="45" y="1159" width="10" height="14" fill="none" stroke="#cfcfcf" stroke-width="1.3"/></svg>
<!-- DOCK --><svg class="a" style="left:0;top:1115px" width="1920" height="85" viewBox="0 1115 1920 85"><defs><linearGradient id="dockbg" x1="0" x2="1"><stop offset="0" stop-color="#9283ac"/><stop offset="0.12" stop-color="#7b60c4"/><stop offset="0.45" stop-color="#7d5bd6"/><stop offset="0.75" stop-color="#a457ee"/><stop offset="1" stop-color="#b260f4"/></linearGradient><linearGradient id="deskbg" x1="0" y1="0" x2="0.15" y2="1"><stop offset="0" stop-color="#30108a"/><stop offset="1" stop-color="#4a10d0"/></linearGradient><linearGradient id="fnd" x1="0" y1="0" x2="0" y2="1"><stop offset="0" stop-color="#1ec8fb"/><stop offset="1" stop-color="#1a6ff0"/></linearGradient><linearGradient id="brv" x1="0" x2="1"><stop offset="0" stop-color="#ff5a00"/><stop offset="1" stop-color="#ff2000"/></linearGradient><linearGradient id="saf0" x1="0" y1="0" x2="0" y2="1"><stop offset="0" stop-color="#f4f4f6"/><stop offset="1" stop-color="#dcdce0"/></linearGradient><linearGradient id="saf" x1="0" y1="0" x2="0" y2="1"><stop offset="0" stop-color="#3ec2fd"/><stop offset="1" stop-color="#1a74e8"/></linearGradient><linearGradient id="msg" x1="0" y1="0" x2="0" y2="1"><stop offset="0" stop-color="#5df870"/><stop offset="1" stop-color="#0cbd2a"/></linearGradient><linearGradient id="mail" x1="0" y1="0" x2="0" y2="1"><stop offset="0" stop-color="#1fb4fa"/><stop offset="1" stop-color="#1a68f2"/></linearGradient><linearGradient id="ft" x1="0" y1="0" x2="0" y2="1"><stop offset="0" stop-color="#5ff772"/><stop offset="1" stop-color="#0dbf2b"/></linearGradient><linearGradient id="ct" x1="0" y1="0" x2="0" y2="1"><stop offset="0" stop-color="#c89a5c"/><stop offset="1" stop-color="#a87a40"/></linearGradient><linearGradient id="mus" x1="0" y1="0" x2="0" y2="1"><stop offset="0" stop-color="#fc5c6c"/><stop offset="1" stop-color="#f2243c"/></linearGradient><linearGradient id="pod" x1="0" y1="0" x2="0" y2="1"><stop offset="0" stop-color="#c15cf0"/><stop offset="1" stop-color="#8a2cd0"/></linearGradient><linearGradient id="as" x1="0" y1="0" x2="0" y2="1"><stop offset="0" stop-color="#1fb8f8"/><stop offset="1" stop-color="#1a6af0"/></linearGradient><linearGradient id="sp" x1="0" y1="0" x2="0" y2="1"><stop offset="0" stop-color="#a8a8a8"/><stop offset="1" stop-color="#707070"/></linearGradient><linearGradient id="af" x1="0" y1="0" x2="0" y2="1"><stop offset="0" stop-color="#5ad8fc"/><stop offset="1" stop-color="#1a90e0"/></linearGradient><linearGradient id="stk" x1="0" y1="0" x2="0" y2="1"><stop offset="0" stop-color="#fdf0a8"/><stop offset="1" stop-color="#f5e080"/></linearGradient><linearGradient id="tr" x1="0" y1="0" x2="0" y2="1"><stop offset="0" stop-color="#f4f4f6"/><stop offset="1" stop-color="#cacad0"/></linearGradient></defs><rect x="95" y="1120" width="1825" height="80" fill="url(#deskbg)"/><rect x="95" y="1193" width="1825" height="7" fill="#2e0c80" opacity=".5"/><rect x="50" y="1120" width="1820" height="73" rx="18" fill="url(#dockbg)" stroke="rgba(255,255,255,0.25)" stroke-width="1"/><rect x="60.0" y="1131" width="48" height="48" rx="11" fill="url(#fnd)"/><path d="M85.0 1131 h12 a11 11 0 0 1 11 11 v26 a11 11 0 0 1 -11 11 h-8 c-2-8-3-14-3-20 h-5 c1-10 2-20 4-28z" fill="#e8ebf0"/><path d="M72.0 1164 q13 10 26 0" fill="none" stroke="#222" stroke-width="1.8"/><rect x="75.0" y="1145" width="2" height="5" fill="#222"/><rect x="93.0" y="1145" width="2" height="5" fill="#222"/><rect x="120.7" y="1131" width="48" height="48" rx="11" fill="#d9d3ea"/><rect x="128.7" y="1141.0" width="9" height="9" rx="2.5" fill="#2ed158"/><rect x="140.7" y="1141.0" width="9" height="9" rx="2.5" fill="#ffcc00"/><rect x="152.7" y="1141.0" width="9" height="9" rx="2.5" fill="#ff9500"/><rect x="128.7" y="1152.5" width="9" height="9" rx="2.5" fill="#e0252a"/><rect x="140.7" y="1152.5" width="9" height="9" rx="2.5" fill="#b0b0b8"/><rect x="152.7" y="1152.5" width="9" height="9" rx="2.5" fill="#ff3b6b"/><rect x="128.7" y="1164.0" width="9" height="9" rx="2.5" fill="#9f4de8"/><rect x="140.7" y="1164.0" width="9" height="9" rx="2.5" fill="#0a84ff"/><rect x="152.7" y="1164.0" width="9" height="9" rx="2.5" fill="#30d1a0"/><rect x="181.4" y="1131" width="48" height="48" rx="11" fill="#fff"/><polygon points="198,1133.5 212.5,1133.5 216,1137.5 220.5,1138 223.5,1141.5 223,1147.5 219,1168 205.5,1177 192.5,1168 187.5,1147.5 187,1141.5 190,1138 195,1137.5" fill="url(#brv)"/><polygon points="191,1147.5 196,1140 215,1140 220,1147.5 214.5,1155 212.5,1161.5 205.5,1166 199,1161.5 196.5,1155" fill="#fff"/><polygon points="199.5,1163 205.5,1159.5 211.5,1163 205.5,1168.5" fill="#fff"/><path d="M196 1145.5h5.5l1.5 3v5l-1.5 1.5 4 2.5 4-2.5-1.5-1.5v-5l1.5-3h5.5M199 1161.5l6.5-4 6.5 4" fill="none" stroke="#ff3a00" stroke-width="1.3"/><rect x="242.1" y="1131" width="48" height="48" rx="11" fill="#fff"/><path d="M266.1 1155 L249.6 1145.5 A19 19 0 0 1 282.6 1145.5 z" fill="#db4437"/><path d="M266.1 1155 L282.6 1145.5 A19 19 0 0 1 266.1 1174.0 z" fill="#fbc02d"/><path d="M266.1 1155 L266.1 1174.0 A19 19 0 0 1 249.6 1145.5 z" fill="#0f9d58"/><circle cx="266.1" cy="1155" r="9" fill="#fff"/><circle cx="266.1" cy="1155" r="7" fill="#4285f4"/><rect x="302.8" y="1131" width="48" height="48" rx="11" fill="url(#saf0)"/><circle cx="326.8" cy="1155" r="19" fill="url(#saf)"/><circle cx="326.8" cy="1155" r="16" fill="none" stroke="#fff" stroke-width="1" stroke-dasharray="1 2.5" opacity=".7"/><path d="M338.8 1143 L328.8 1157 L324.8 1153z" fill="#f03a2e"/><path d="M314.8 1167 L324.8 1153 L328.8 1157z" fill="#fff"/><rect x="363.5" y="1131" width="48" height="48" rx="11" fill="url(#msg)"/><ellipse cx="387.5" cy="1154" rx="17" ry="13" fill="#fff"/><path d="M377.5 1164 l-3 7 8-4z" fill="#fff"/><rect x="424.2" y="1131" width="48" height="48" rx="11" fill="url(#mail)"/><rect x="432.20000000000005" y="1145" width="32" height="21" rx="2" fill="#f2f2f6"/><path d="M432.20000000000005 1146 l16 11 16-11" fill="none" stroke="#b8c0cc" stroke-width="1.3"/><rect x="484.9" y="1131" width="48" height="48" rx="11" fill="#f2f0e8"/><path d="M512.9000000000001 1131 h9 a11 11 0 0 1 11 11 v11 c-6 0-14-4-20-11z" fill="#3ccb5c"/><path d="M484.90000000000003 1161 l16 -4 v22 h-5 a11 11 0 0 1 -11 -11z" fill="#f58bc8"/><path d="M512.9000000000001 1169 l20 -8 v7 a11 11 0 0 1 -11 11 h-9z" fill="#ffd23a"/><rect x="500.90000000000003" y="1131" width="6" height="48" fill="#2e8cf5"/><circle cx="501.90000000000003" cy="1162" r="10" fill="#2a86f5" stroke="#fff" stroke-width="2.5"/><path d="M501.90000000000003 1155 l5 12 -5-3 -5 3z" fill="#fff"/><rect x="545.6" y="1131" width="48" height="48" rx="11" fill="#fff"/><ellipse cx="569.6" cy="1145" rx="6" ry="10" fill="#fcb900" opacity="0.85" transform="rotate(0 569.6 1155)"/><ellipse cx="569.6" cy="1145" rx="6" ry="10" fill="#f58a07" opacity="0.85" transform="rotate(45 569.6 1155)"/><ellipse cx="569.6" cy="1145" rx="6" ry="10" fill="#f0453a" opacity="0.85" transform="rotate(90 569.6 1155)"/><ellipse cx="569.6" cy="1145" rx="6" ry="10" fill="#d6408f" opacity="0.85" transform="rotate(135 569.6 1155)"/><ellipse cx="569.6" cy="1145" rx="6" ry="10" fill="#9a5cc8" opacity="0.85" transform="rotate(180 569.6 1155)"/><ellipse cx="569.6" cy="1145" rx="6" ry="10" fill="#3a8bf0" opacity="0.85" transform="rotate(225 569.6 1155)"/><ellipse cx="569.6" cy="1145" rx="6" ry="10" fill="#2ebfa8" opacity="0.85" transform="rotate(270 569.6 1155)"/><ellipse cx="569.6" cy="1145" rx="6" ry="10" fill="#7ed04a" opacity="0.85" transform="rotate(315 569.6 1155)"/><rect x="606.3" y="1131" width="48" height="48" rx="11" fill="url(#ft)"/><rect x="613.3000000000001" y="1146" width="23" height="19" rx="5" fill="#fff" opacity=".92"/><path d="M637.3000000000001 1153 l10-6 v17 l-10-6z" fill="#fff" opacity=".85"/><rect x="667.0" y="1131" width="48" height="48" rx="11" fill="#fafafa"/><path d="M667.0 1142 a11 11 0 0 1 11 -11 h26 a11 11 0 0 1 11 11 v3 h-48z" fill="#f6413a"/><text x="691.0" y="1143" font-family="Liberation Sans" font-weight="bold" font-size="10" fill="#fff" text-anchor="middle">MAR</text><text x="691.0" y="1173" font-family="Liberation Sans" font-size="28" fill="#222" text-anchor="middle">2</text><rect x="727.7" y="1131" width="48" height="48" rx="11" fill="url(#ct)"/><rect x="771.7" y="1141" width="4" height="8" fill="#4aa8f0"/><rect x="771.7" y="1151" width="4" height="8" fill="#f6a030"/><rect x="771.7" y="1161" width="4" height="8" fill="#38c060"/><circle cx="749.7" cy="1155" r="14" fill="none" stroke="#8a6030" stroke-width="1.3"/><circle cx="749.7" cy="1151" r="5" fill="#8a6030" opacity=".6"/><path d="M739.7 1164 a11 8 0 0 1 20 0" fill="#8a6030" opacity=".6"/><rect x="788.4" y="1131" width="48" height="48" rx="11" fill="#fafafa"/><circle cx="798.4000000000001" cy="1143.0" r="3.5" fill="none" stroke="#1e7cf5" stroke-width="1.5"/><circle cx="798.4000000000001" cy="1143.0" r="2" fill="#1e7cf5"/><rect x="806.4000000000001" y="1142.0" width="24" height="1.3" fill="#c8c8c8"/><circle cx="798.4000000000001" cy="1154.5" r="3.5" fill="none" stroke="#f23a30" stroke-width="1.5"/><circle cx="798.4000000000001" cy="1154.5" r="2" fill="#f23a30"/><rect x="806.4000000000001" y="1153.5" width="24" height="1.3" fill="#c8c8c8"/><circle cx="798.4000000000001" cy="1166.0" r="3.5" fill="none" stroke="#f59a20" stroke-width="1.5"/><circle cx="798.4000000000001" cy="1166.0" r="2" fill="#f59a20"/><rect x="806.4000000000001" y="1165.0" width="24" height="1.3" fill="#c8c8c8"/><rect x="849.1" y="1131" width="48" height="48" rx="11" fill="#f6f4ee"/><path d="M849.1 1142 a11 11 0 0 1 11 -11 h26 a11 11 0 0 1 11 11 v3 h-48z" fill="#fdc92e"/><rect x="849.1" y="1153" width="48" height="1" fill="#d8d4ca"/><rect x="849.1" y="1161" width="48" height="1" fill="#d8d4ca"/><rect x="849.1" y="1169" width="48" height="1" fill="#d8d4ca"/><rect x="909.8" y="1131" width="48" height="48" rx="11" fill="#1c1f1e"/><text x="942.8000000000001" y="1162" font-family="Liberation Sans" font-weight="bold" font-size="17" fill="#fff" text-anchor="middle">tv</text><path d="M922.8000000000001 1149 c3-1 5 0 6 0 c-2 1-3 3-2 5 1 2 2 3 3 3 c-1 3-3 5-4 5 c-1 0-2-1-3-1 c-1 0-2 1-3 1 c-2 0-5-5-4-9 c1-3 3-4 5-4 z M923.8000000000001 1148 c0-2 1-3 3-4 0 2-1 3-3 4z" fill="#fff"/><rect x="970.5" y="1131" width="48" height="48" rx="11" fill="url(#mus)"/><path d="M989.5 1144 l16-4 v22" fill="none" stroke="#fff" stroke-width="3"/><path d="M989.5 1144 v21" stroke="#fff" stroke-width="3"/><ellipse cx="985.5" cy="1166" rx="5" ry="4" fill="#fff"/><ellipse cx="1001.5" cy="1163" rx="5" ry="4" fill="#fff"/><rect x="1031.2" y="1131" width="48" height="48" rx="11" fill="url(#pod)"/><circle cx="1055.2" cy="1152" r="14" fill="none" stroke="#fff" stroke-width="2.2"/><circle cx="1055.2" cy="1152" r="8" fill="none" stroke="#fff" stroke-width="2.2"/><circle cx="1055.2" cy="1152" r="4" fill="#fff"/><rect x="1052.2" y="1158" width="6" height="15" rx="3" fill="#fff"/><rect x="1047.2" y="1164" width="16" height="8" fill="url(#pod)"/><rect x="1052.2" y="1158" width="6" height="15" rx="3" fill="#fff"/><rect x="1091.9" y="1131" width="48" height="48" rx="11" fill="#fafafa"/><rect x="1101.9" y="1141" width="28" height="14" fill="#2a7cf0"/><circle cx="1117.9" cy="1147" r="4" fill="#f8b020"/><rect x="1114.9" y="1155" width="2" height="16" fill="#8aa0c0"/><rect x="1107.9" y="1170" width="16" height="2" fill="#8aa0c0"/><rect x="1152.6" y="1131" width="48" height="48" rx="11" fill="#f6fbf4"/><rect x="1161.6000000000001" y="1155" width="6" height="16" fill="#e0203a"/><rect x="1169.6000000000001" y="1147" width="6" height="24" fill="#f58a10"/><rect x="1177.6000000000001" y="1137" width="6" height="34" fill="#28c040"/><rect x="1185.6000000000001" y="1143" width="6" height="28" fill="#2a90f0"/><rect x="1213.3" y="1131" width="48" height="48" rx="11" fill="#fbf6ee"/><text x="1220.3" y="1155" font-family="Liberation Serif" font-weight="bold" font-size="20" fill="#f58a10">“</text><path d="M1229.3 1173 l20-34 3 2 -20 34z" fill="#f5a020"/><path d="M1229.3 1173 l3-5 2 1z" fill="#333"/><rect x="1274.0" y="1131" width="48" height="48" rx="11" fill="url(#as)"/><path d="M1291.0 1167 l12-22 M1305.0 1167 l-9-16 M1285.0 1161 h26" stroke="#fff" stroke-width="3" stroke-linecap="round"/><rect x="1334.7" y="1131" width="48" height="48" rx="11" fill="url(#sp)"/><circle cx="1358.7" cy="1155" r="18" fill="#3a3a3a"/><circle cx="1358.7" cy="1155" r="15" fill="#8a8a8a"/><circle cx="1358.7" cy="1155" r="11" fill="#3e3e3e"/><circle cx="1358.7" cy="1155" r="4" fill="#8a8a8a"/><path d="M1358.7 1144 v7 M1348.7 1161 l6-4 M1368.7 1161 l-6-4" stroke="#8a8a8a" stroke-width="3"/><rect x="1395.4" y="1131" width="48" height="48" rx="11" fill="#fafafa"/><path d="M1403.4 1153 c8 10 20 10 34 -6 l-4 18 c-10 6-22 6-30-4z" fill="#2a6ae8"/><path d="M1413.4 1141 h16 c-2 8-6 12-10 12z" fill="#22c8a8"/><rect x="1456.1" y="1131" width="48" height="48" rx="11" fill="url(#af)"/><path d="M1462.1000000000001 1171 L1486.1000000000001 1133 M1470.1000000000001 1157 L1484.1000000000001 1171 M1462.1000000000001 1171 H1504.1000000000001 M1476.1000000000001 1133 L1500.1000000000001 1169" fill="none" stroke="#0b4a8a" stroke-width="1.6" opacity=".8"/><path d="M1541 1134.5L1556 1144M1523 1144.75H1545M1515.5 1166L1533 1150" stroke="#e87d0d" stroke-width="5" stroke-linecap="round"/><ellipse cx="1548" cy="1160" rx="18" ry="16" fill="#e87d0d"/><ellipse cx="1548" cy="1158" rx="12" ry="10.6" fill="#fff"/><ellipse cx="1548" cy="1157.5" rx="7.2" ry="6.5" fill="#265787"/><rect x="1584" y="1130" width="1" height="55" fill="rgba(60,20,110,0.6)"/><rect x="1794" y="1130" width="1" height="55" fill="rgba(60,20,110,0.6)"/><rect x="1605" y="1135" width="48" height="44" rx="11" fill="#dcc25a"/><rect x="1605" y="1131" width="48" height="44" rx="11" fill="url(#stk)"/><path d="M1615 1149 c2-8 4-6 4 0 c2-4 4-4 6-1 c4 2 10 1 16 1 M1615 1157 h28 M1615 1164 h16" fill="none" stroke="#c8b050" stroke-width="2.2"/><rect x="1664.5" y="1131" width="48" height="48" rx="11" fill="#330000"/><text x="1688.5" y="1164" font-family="Liberation Sans" font-weight="bold" font-size="24" fill="#ff9a00" text-anchor="middle">Ai</text><rect x="1725.5" y="1131" width="48" height="48" rx="11" fill="#001e36"/><text x="1749.5" y="1164" font-family="Liberation Sans" font-weight="bold" font-size="24" fill="#31a8ff" text-anchor="middle">Ps</text><path d="M1823 1135 h36 l-4 42 a4 4 0 0 1 -4 3 h-20 a4 4 0 0 1 -4 -3z" fill="url(#tr)" stroke="#bbb" stroke-width=".8"/><path d="M1827 1137 l6-4 8 3 6-4 8 5z" fill="#8a8a90"/><circle cx="649" cy="1137" r="10" fill="#f2362c"/><text x="649" y="1142.5" font-family="Liberation Sans" font-size="14" fill="#fff" text-anchor="middle">5</text><circle cx="709" cy="1137" r="10" fill="#f2362c"/><text x="709" y="1142.5" font-family="Liberation Sans" font-size="14" fill="#fff" text-anchor="middle">1</text><circle cx="831" cy="1137" r="10" fill="#f2362c"/><text x="831" y="1142.5" font-family="Liberation Sans" font-size="14" fill="#fff" text-anchor="middle">4</text><circle cx="1376" cy="1137" r="10" fill="#f2362c"/><text x="1376" y="1142.5" font-family="Liberation Sans" font-size="14" fill="#fff" text-anchor="middle">2</text><circle cx="84" cy="1188" r="2.5" fill="#1a0a40"/><circle cx="327" cy="1188" r="2.5" fill="#1a0a40"/><circle cx="1418.5" cy="1188" r="2.5" fill="#1a0a40"/><circle cx="1628" cy="1188" r="2.5" fill="#1a0a40"/><circle cx="1688" cy="1188" r="2.5" fill="#1a0a40"/><circle cx="1749" cy="1188" r="2.5" fill="#1a0a40"/></svg><!-- /DOCK -->
</body></html>
